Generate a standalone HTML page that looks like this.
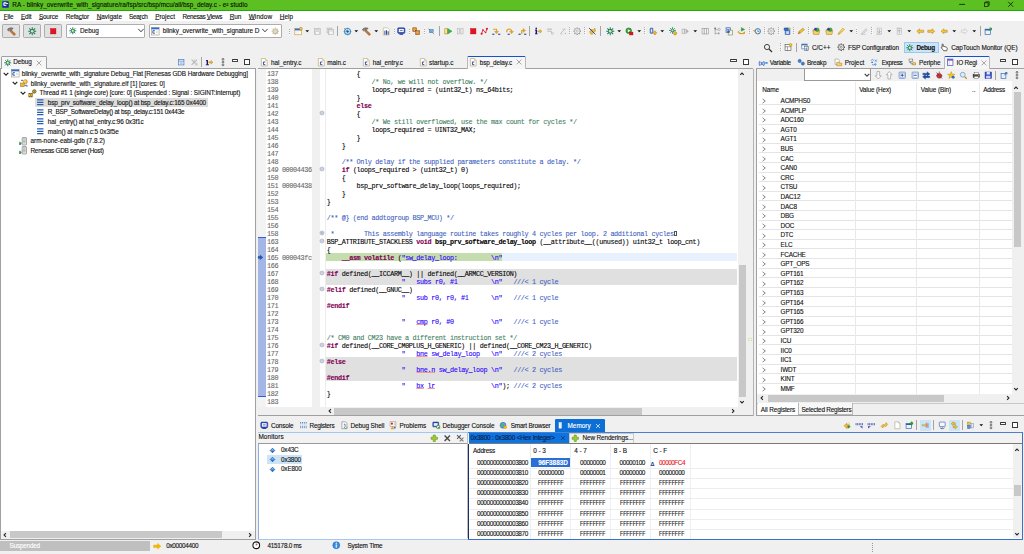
<!DOCTYPE html><html><head><meta charset="utf-8"><title>e2 studio</title><style>
html,body{margin:0;padding:0;}
body{width:1024px;height:554px;overflow:hidden;background:#f0f0f0;position:relative;font-family:"Liberation Sans",sans-serif;}
div{position:absolute;box-sizing:border-box;}
.t{white-space:pre;font-family:"Liberation Sans",sans-serif;-webkit-text-stroke:0.12px currentColor;}
.m{white-space:pre;font-family:"Liberation Mono",monospace;-webkit-text-stroke:0.1px currentColor;}
svg{position:absolute;overflow:visible;}
.q{text-decoration:underline solid #f09a9a;text-decoration-thickness:0.45px;text-underline-offset:0.4px;text-decoration-skip-ink:none;}
u{text-decoration:underline;text-decoration-thickness:0.4px;text-underline-offset:0.1px;text-decoration-color:#555;}
</style></head><body>
<div style="left:0.00px;top:0.00px;width:1024.00px;height:11.00px;background:#5cbf22;"></div>
<div style="left:0.00px;top:10.10px;width:1024.00px;height:0.90px;background:#22a80e;"></div>
<div style="left:1.90px;top:1.20px;width:7.00px;height:7.10px;background:#1b2a8a;border-radius:1px;border:0.5px solid #2f44b0;"></div>
<div class="t" style="left:3.00px;top:-0.70px;font-size:6.6px;line-height:10px;color:#fff;font-weight:bold;">e</div>
<div style="left:6.00px;top:2.60px;width:1.60px;height:1.20px;background:#e8ecff;"></div>
<div class="t" style="left:12.30px;top:0.20px;font-size:6.4px;line-height:10px;color:#081008;letter-spacing:0.032px;-webkit-text-stroke:0.12px #081008;">RA - blinky_overwrite_with_signature/ra/fsp/src/bsp/mcu/all/bsp_delay.c - e² studio</div>
<svg style="left:960.00px;top:0.00px" width="64" height="11" viewBox="0 0 64 11"><path d="M-0.8,4.4h5.9" stroke="#0a1a05" stroke-width="0.8" fill="none"/><rect x="24.5" y="2.8" width="3.6" height="3.6" fill="none" stroke="#0a1a05" stroke-width="0.7"/><path d="M25.6,2.8v-1h3.6v3.6h-1" fill="none" stroke="#0a1a05" stroke-width="0.7"/><path d="M48.2,1.8l5,5M53.2,1.8l-5,5" stroke="#0a1a05" stroke-width="0.8" fill="none"/></svg>
<div style="left:0.00px;top:11.00px;width:1024.00px;height:9.80px;background:#ffffff;"></div>
<div class="t" style="left:3.80px;top:12.00px;font-size:6.4px;line-height:10px;color:#111;letter-spacing:-0.203px;"><u>F</u>ile</div>
<div class="t" style="left:20.90px;top:12.00px;font-size:6.4px;line-height:10px;color:#111;letter-spacing:-0.157px;"><u>E</u>dit</div>
<div class="t" style="left:38.90px;top:12.00px;font-size:6.4px;line-height:10px;color:#111;letter-spacing:-0.180px;"><u>S</u>ource</div>
<div class="t" style="left:65.70px;top:12.00px;font-size:6.4px;line-height:10px;color:#111;letter-spacing:-0.098px;">Refa<u>c</u>tor</div>
<div class="t" style="left:96.70px;top:12.00px;font-size:6.4px;line-height:10px;color:#111;letter-spacing:0.005px;"><u>N</u>avigate</div>
<div class="t" style="left:129.00px;top:12.00px;font-size:6.4px;line-height:10px;color:#111;letter-spacing:-0.280px;">Sea<u>r</u>ch</div>
<div class="t" style="left:155.20px;top:12.00px;font-size:6.4px;line-height:10px;color:#111;letter-spacing:-0.017px;"><u>P</u>roject</div>
<div class="t" style="left:182.60px;top:12.00px;font-size:6.4px;line-height:10px;color:#111;letter-spacing:-0.346px;">Renesas <u>V</u>iews</div>
<div class="t" style="left:229.70px;top:12.00px;font-size:6.4px;line-height:10px;color:#111;letter-spacing:-0.114px;"><u>R</u>un</div>
<div class="t" style="left:248.70px;top:12.00px;font-size:6.4px;line-height:10px;color:#111;letter-spacing:0.140px;"><u>W</u>indow</div>
<div class="t" style="left:279.80px;top:12.00px;font-size:6.4px;line-height:10px;color:#111;letter-spacing:0.009px;"><u>H</u>elp</div>
<div style="left:2.30px;top:24.30px;width:17.70px;height:13.30px;background:#e1e1e1;border:0.6px solid #adadad;border-radius:1.2px;"></div>
<svg style="left:6.88px;top:26.63px" width="8.533" height="8.533" viewBox="0 0 16 16"><path d="M7.2,5L16,13.2L13.4,16L5,7.6Z" fill="#d0762a" stroke="#7a3a0a" stroke-width="0.9" /><path d="M0.8,5.5C2,2 6,0.5 11.5,2.5L8,6L5.8,4.8L3.2,7.6Z" fill="#8a8a8a" stroke="#3a3a3a" stroke-width="0.9" /></svg>
<div style="left:23.10px;top:24.30px;width:17.60px;height:13.30px;background:#e1e1e1;border:0.6px solid #adadad;border-radius:1.2px;"></div>
<svg style="left:27.63px;top:26.63px" width="8.533" height="8.533" viewBox="0 0 16 16"><path d="M8,0.5v15M0.5,8h15M2.5,2.5l11,11M13.5,2.5l-11,11" fill="none" stroke="#1b7a72" stroke-width="1.9" /><circle cx="8" cy="8" r="4.4" fill="#1b7a72"/><circle cx="8" cy="8" r="2.6" fill="#c8ec70"/><circle cx="7.3" cy="7.3" r="1" fill="#f4ffd8"/></svg>
<div style="left:44.00px;top:24.30px;width:17.70px;height:13.30px;background:#e1e1e1;border:0.6px solid #adadad;border-radius:1.2px;"></div>
<svg style="left:48.58px;top:26.63px" width="8.533" height="8.533" viewBox="0 0 16 16"><rect x="3" y="3" width="10" height="10" fill="#e81123" stroke="#b00010" stroke-width="0.8"/></svg>
<div style="left:66.00px;top:24.20px;width:79.40px;height:13.40px;background:#ffffff;border:0.6px solid #adadad;border-radius:1px;"></div>
<svg style="left:68.75px;top:27.15px" width="7.500" height="7.500" viewBox="0 0 16 16"><path d="M8,0.5v15M0.5,8h15M2.5,2.5l11,11M13.5,2.5l-11,11" fill="none" stroke="#1b7a72" stroke-width="1.9" /><circle cx="8" cy="8" r="4.4" fill="#1b7a72"/><circle cx="8" cy="8" r="2.6" fill="#c8ec70"/><circle cx="7.3" cy="7.3" r="1" fill="#f4ffd8"/></svg>
<div class="t" style="left:80.00px;top:25.90px;font-size:6.4px;line-height:10px;color:#111;letter-spacing:-0.022px;">Debug</div>
<svg style="left:136.60px;top:28.30px" width="8" height="6" viewBox="0 0 8 6"><path d="M1.3,0.9l2.65,2.9l2.65,-2.9" fill="none" stroke="#333" stroke-width="0.95" /></svg>
<div style="left:148.90px;top:24.20px;width:133.10px;height:13.40px;background:#ffffff;border:0.6px solid #adadad;border-radius:1px;"></div>
<svg style="left:151.43px;top:26.63px" width="8.533" height="8.533" viewBox="0 0 16 16"><rect x="0.8" y="1" width="14.4" height="14" fill="#fff" stroke="#a89a6a" stroke-width="1.2"/><rect x="0.8" y="1" width="14.4" height="3.4" fill="#2a6fd0"/><path d="M7.5,7h-4v4.6h4" fill="none" stroke="#1a3fa8" stroke-width="1.6" /><path d="M9.5,8h3M9.5,10.5h3" fill="none" stroke="#9ab8e8" stroke-width="1" /></svg>
<div class="t" style="left:162.70px;top:25.90px;font-size:6.4px;line-height:10px;color:#111;letter-spacing:-0.006px;">blinky_overwrite_with_signature D</div>
<svg style="left:261.20px;top:28.30px" width="8" height="6" viewBox="0 0 8 6"><path d="M1.3,0.9l2.65,2.9l2.65,-2.9" fill="none" stroke="#333" stroke-width="0.95" /></svg>
<svg style="left:270.73px;top:26.63px" width="8.533" height="8.533" viewBox="0 0 16 16"><circle cx="8" cy="8" r="4.2" fill="#efe9d6" stroke="#c9c0a0" stroke-width="2.4"/><circle cx="8" cy="8" r="1.6" fill="#f8f6ee" stroke="#c9c0a0" stroke-width="1"/><path d="M8,1v2M8,13v2M1,8h2M13,8h2M3,3l1.4,1.4M13,3l-1.4,1.4M3,13l1.4,-1.4M13,13l-1.4,-1.4" fill="none" stroke="#c9c0a0" stroke-width="2" /></svg>
<div style="left:288.70px;top:26.90px;width:0.65px;height:1.00px;background:#b4aca0;"></div>
<div style="left:289.35px;top:27.45px;width:0.60px;height:1.00px;background:#ffffff;"></div>
<div style="left:288.70px;top:29.03px;width:0.65px;height:1.00px;background:#b4aca0;"></div>
<div style="left:289.35px;top:29.58px;width:0.60px;height:1.00px;background:#ffffff;"></div>
<div style="left:288.70px;top:31.17px;width:0.65px;height:1.00px;background:#b4aca0;"></div>
<div style="left:289.35px;top:31.72px;width:0.60px;height:1.00px;background:#ffffff;"></div>
<div style="left:288.70px;top:33.30px;width:0.65px;height:1.00px;background:#b4aca0;"></div>
<div style="left:289.35px;top:33.85px;width:0.60px;height:1.00px;background:#ffffff;"></div>
<svg style="left:293.63px;top:26.63px" width="8.533" height="8.533" viewBox="0 0 16 16"><rect x="1.5" y="3" width="12.5" height="11.5" fill="#fff" stroke="#d0a848" stroke-width="1.4"/><rect x="1.5" y="3" width="12.5" height="3.4" fill="#2f6fd0"/><path d="M3.5,9h8M3.5,11.5h6" fill="none" stroke="#e8e0c0" stroke-width="1" /><circle cx="13" cy="3.2" r="2.7" fill="#f5c85a" stroke="#b8760b" stroke-width="0.9"/></svg>
<svg style="left:303.23px;top:26.63px" width="8.533" height="8.533" viewBox="0 0 16 16"><path d="M4.4,6h7.2l-3.6,4z" fill="#111" /></svg>
<svg style="left:313.23px;top:26.63px" width="8.533" height="8.533" viewBox="0 0 16 16"><rect x="2.5" y="2.5" width="11" height="11" fill="#e4e4e4" stroke="#b4b4b4" stroke-width="1.2"/><rect x="5" y="2.5" width="6" height="4" fill="#cfcfcf"/><rect x="4.5" y="9" width="7" height="4.5" fill="#f8f8f8" stroke="#bdbdbd" stroke-width="0.8"/></svg>
<svg style="left:325.73px;top:26.63px" width="8.533" height="8.533" viewBox="0 0 16 16"><rect x="2" y="2" width="9" height="9" fill="#e4e4e4" stroke="#b4b4b4" stroke-width="1.2"/><rect x="5" y="5" width="9" height="9" fill="#e4e4e4" stroke="#b4b4b4" stroke-width="1.2"/><rect x="7" y="9.5" width="5" height="4" fill="#f8f8f8"/></svg>
<div style="left:337.15px;top:26.00px;width:0.70px;height:9.80px;background:#a4a4a4;"></div>
<svg style="left:342.63px;top:26.63px" width="8.533" height="8.533" viewBox="0 0 16 16"><circle cx="8.5" cy="8.5" r="5.6" fill="#f4f9ff" stroke="#3a8fc8" stroke-width="2"/><circle cx="8.5" cy="8.5" r="2.3" fill="#1a4f8a"/><path d="M8.5,1v4M8.5,12v4M1,8.5h4M12,8.5h4" fill="none" stroke="#3a8fc8" stroke-width="1.2" /><path d="M2,2l5,5" fill="none" stroke="#8a7a5a" stroke-width="1.3" /></svg>
<svg style="left:352.33px;top:26.63px" width="8.533" height="8.533" viewBox="0 0 16 16"><path d="M4.4,6h7.2l-3.6,4z" fill="#111" /></svg>
<svg style="left:362.33px;top:26.63px" width="8.533" height="8.533" viewBox="0 0 16 16"><path d="M7.2,5L16,13.2L13.4,16L5,7.6Z" fill="#d0762a" stroke="#7a3a0a" stroke-width="0.9" /><path d="M0.8,5.5C2,2 6,0.5 11.5,2.5L8,6L5.8,4.8L3.2,7.6Z" fill="#8a8a8a" stroke="#3a3a3a" stroke-width="0.9" /></svg>
<svg style="left:372.33px;top:26.63px" width="8.533" height="8.533" viewBox="0 0 16 16"><path d="M4.4,6h7.2l-3.6,4z" fill="#111" /></svg>
<svg style="left:382.33px;top:26.63px" width="8.533" height="8.533" viewBox="0 0 16 16"><path d="M2.5,1.5h8l3,3v10.5h-11z" fill="#fff" stroke="#c8b070" stroke-width="1.2" /><path d="M5.5,7v7.5M8.5,6v8.5M11.5,8v6.5" fill="none" stroke="#1a3fa0" stroke-width="1.8" /></svg>
<div style="left:393.55px;top:26.90px;width:0.65px;height:1.00px;background:#b4aca0;"></div>
<div style="left:394.20px;top:27.45px;width:0.60px;height:1.00px;background:#ffffff;"></div>
<div style="left:393.55px;top:29.03px;width:0.65px;height:1.00px;background:#b4aca0;"></div>
<div style="left:394.20px;top:29.58px;width:0.60px;height:1.00px;background:#ffffff;"></div>
<div style="left:393.55px;top:31.17px;width:0.65px;height:1.00px;background:#b4aca0;"></div>
<div style="left:394.20px;top:31.72px;width:0.60px;height:1.00px;background:#ffffff;"></div>
<div style="left:393.55px;top:33.30px;width:0.65px;height:1.00px;background:#b4aca0;"></div>
<div style="left:394.20px;top:33.85px;width:0.60px;height:1.00px;background:#ffffff;"></div>
<svg style="left:397.33px;top:26.63px" width="8.533" height="8.533" viewBox="0 0 16 16"><rect x="1.2" y="1.5" width="13.6" height="10.5" fill="#2a4fc0" stroke="#1a2f90" stroke-width="1" rx="2"/><rect x="3.3" y="3.6" width="9.4" height="6" fill="#f4f8ff"/><path d="M5.5,6.6h5" fill="none" stroke="#223" stroke-width="1.1" /><rect x="4.5" y="12.5" width="7" height="2" fill="#1a2f80"/></svg>
<div style="left:408.55px;top:26.90px;width:0.65px;height:1.00px;background:#b4aca0;"></div>
<div style="left:409.20px;top:27.45px;width:0.60px;height:1.00px;background:#ffffff;"></div>
<div style="left:408.55px;top:29.03px;width:0.65px;height:1.00px;background:#b4aca0;"></div>
<div style="left:409.20px;top:29.58px;width:0.60px;height:1.00px;background:#ffffff;"></div>
<div style="left:408.55px;top:31.17px;width:0.65px;height:1.00px;background:#b4aca0;"></div>
<div style="left:409.20px;top:31.72px;width:0.60px;height:1.00px;background:#ffffff;"></div>
<div style="left:408.55px;top:33.30px;width:0.65px;height:1.00px;background:#b4aca0;"></div>
<div style="left:409.20px;top:33.85px;width:0.60px;height:1.00px;background:#ffffff;"></div>
<svg style="left:412.33px;top:26.63px" width="8.533" height="8.533" viewBox="0 0 16 16"><rect x="1.5" y="1.5" width="7" height="7" fill="#d08a30" stroke="#8a4a12" stroke-width="1"/><path d="M1.5,5h7M5,1.5v7" fill="none" stroke="#f0c070" stroke-width="0.9" /><rect x="7" y="7" width="7.5" height="7.5" fill="#d08a30" stroke="#8a4a12" stroke-width="1"/><path d="M7,10.7h7.5M10.7,7v7.5" fill="none" stroke="#f0c070" stroke-width="0.9" /></svg>
<div style="left:423.55px;top:26.90px;width:0.65px;height:1.00px;background:#b4aca0;"></div>
<div style="left:424.20px;top:27.45px;width:0.60px;height:1.00px;background:#ffffff;"></div>
<div style="left:423.55px;top:29.03px;width:0.65px;height:1.00px;background:#b4aca0;"></div>
<div style="left:424.20px;top:29.58px;width:0.60px;height:1.00px;background:#ffffff;"></div>
<div style="left:423.55px;top:31.17px;width:0.65px;height:1.00px;background:#b4aca0;"></div>
<div style="left:424.20px;top:31.72px;width:0.60px;height:1.00px;background:#ffffff;"></div>
<div style="left:423.55px;top:33.30px;width:0.65px;height:1.00px;background:#b4aca0;"></div>
<div style="left:424.20px;top:33.85px;width:0.60px;height:1.00px;background:#ffffff;"></div>
<svg style="left:427.33px;top:26.63px" width="8.533" height="8.533" viewBox="0 0 16 16"><rect x="5" y="5" width="6.5" height="5.5" fill="#7fb8e8" stroke="#2a6fa8" stroke-width="1"/><path d="M2.5,3l11,10.5" fill="none" stroke="#707a88" stroke-width="1.2" /></svg>
<div style="left:439.15px;top:26.00px;width:0.70px;height:9.80px;background:#a4a4a4;"></div>
<svg style="left:443.98px;top:26.63px" width="8.533" height="8.533" viewBox="0 0 16 16"><rect x="1.5" y="3.2" width="4.6" height="9.6" fill="#fdf4c0" stroke="#c8981a" stroke-width="1.5"/><path d="M7,3l8,5l-8,5z" fill="#3fb44f" stroke="#1f8a2f" stroke-width="0.8" /></svg>
<svg style="left:456.13px;top:26.63px" width="8.533" height="8.533" viewBox="0 0 16 16"><rect x="2.5" y="3" width="4.2" height="10" fill="#ececec" stroke="#b4b4b4" stroke-width="1.1"/><rect x="9" y="3" width="4.2" height="10" fill="#ececec" stroke="#b4b4b4" stroke-width="1.1"/></svg>
<svg style="left:468.63px;top:26.63px" width="8.533" height="8.533" viewBox="0 0 16 16"><rect x="3" y="3" width="10" height="10" fill="#e81123" stroke="#b00010" stroke-width="0.8"/></svg>
<svg style="left:480.23px;top:26.63px" width="8.533" height="8.533" viewBox="0 0 16 16"><path d="M3,13l2.5,-8l5,6l2.5,-8" fill="none" stroke="#d81123" stroke-width="1.5" /><circle cx="3" cy="12.5" r="1.9" fill="#e01020"/><circle cx="13" cy="3.5" r="1.9" fill="#e01020"/><circle cx="5.5" cy="5.5" r="1.3" fill="#e01020"/><circle cx="10.5" cy="10.5" r="1.3" fill="#e01020"/></svg>
<svg style="left:492.33px;top:26.63px" width="8.533" height="8.533" viewBox="0 0 16 16"><path d="M2,4.2h6.5v4" fill="none" stroke="#e0a020" stroke-width="2" /><path d="M4.6,8h7.8l-3.9,4.6z" fill="#e8a820" stroke="#a87412" stroke-width="0.5" /><rect x="0.5" y="12.6" width="4" height="2" fill="#1a3a9a"/><rect x="11.5" y="12.6" width="4" height="2" fill="#1a3a9a"/></svg>
<svg style="left:505.23px;top:26.63px" width="8.533" height="8.533" viewBox="0 0 16 16"><path d="M3,10c0,-8 9.5,-8 9.5,-1.5" fill="none" stroke="#e0a020" stroke-width="2.2" /><path d="M8.6,8h7.4l-3.7,4.6z" fill="#e8a820" stroke="#a87412" stroke-width="0.5" /><rect x="5" y="12.6" width="4" height="2" fill="#1a3a9a"/></svg>
<svg style="left:517.73px;top:26.63px" width="8.533" height="8.533" viewBox="0 0 16 16"><path d="M7,13v-6.5h3" fill="none" stroke="#e0a020" stroke-width="2.2" /><path d="M9.5,2.6l4.8,3.9l-4.8,3.9z" fill="#e8a820" stroke="#a87412" stroke-width="0.5" /><rect x="1" y="12.6" width="4" height="2" fill="#1a3a9a"/><rect x="11.5" y="12.6" width="4" height="2" fill="#1a3a9a"/></svg>
<div style="left:529.15px;top:26.00px;width:0.70px;height:9.80px;background:#a4a4a4;"></div>
<svg style="left:533.63px;top:26.63px" width="8.533" height="8.533" viewBox="0 0 16 16"><rect x="3" y="5" width="2.6" height="8" fill="#15157a"/><rect x="2" y="5" width="3" height="1.8" fill="#15157a"/><rect x="1.8" y="12" width="5" height="1.6" fill="#15157a"/><circle cx="4.2" cy="2.6" r="1.5" fill="#15157a"/><path d="M7,7h4v-2.5l4,3.5l-4,3.5v-2.5h-4z" fill="#f0b429" stroke="#a87412" stroke-width="0.6" /></svg>
<svg style="left:546.13px;top:26.63px" width="8.533" height="8.533" viewBox="0 0 16 16"><rect x="2" y="3" width="9" height="2" fill="#b8b8b8"/><rect x="2" y="7" width="9" height="2" fill="#c4c4c4"/><path d="M9,9l4,4" fill="none" stroke="#b0b0b0" stroke-width="1.5" /><circle cx="12" cy="12" r="2" fill="#e8e8e8" stroke="#b0b0b0" stroke-width="1"/></svg>
<svg style="left:558.63px;top:26.63px" width="8.533" height="8.533" viewBox="0 0 16 16"><path d="M3,12l8,-8" fill="none" stroke="#b8b8b8" stroke-width="1.6" /><path d="M6,4h7M2,13h5" fill="none" stroke="#c0c0c0" stroke-width="1.4" /><circle cx="12" cy="12" r="1.2" fill="#b0b0b0"/></svg>
<div style="left:569.45px;top:26.90px;width:0.65px;height:1.00px;background:#b4aca0;"></div>
<div style="left:570.10px;top:27.45px;width:0.60px;height:1.00px;background:#ffffff;"></div>
<div style="left:569.45px;top:29.03px;width:0.65px;height:1.00px;background:#b4aca0;"></div>
<div style="left:570.10px;top:29.58px;width:0.60px;height:1.00px;background:#ffffff;"></div>
<div style="left:569.45px;top:31.17px;width:0.65px;height:1.00px;background:#b4aca0;"></div>
<div style="left:570.10px;top:31.72px;width:0.60px;height:1.00px;background:#ffffff;"></div>
<div style="left:569.45px;top:33.30px;width:0.65px;height:1.00px;background:#b4aca0;"></div>
<div style="left:570.10px;top:33.85px;width:0.60px;height:1.00px;background:#ffffff;"></div>
<svg style="left:573.23px;top:26.63px" width="8.533" height="8.533" viewBox="0 0 16 16"><path d="M8,1v2.2M8,12.8v2.2M1,8h2.2M12.8,8h2.2M3,3l1.6,1.6M13,3l-1.6,1.6M3,13l1.6,-1.6M13,13l-1.6,-1.6" fill="none" stroke="#9a9a9a" stroke-width="2.6" /><circle cx="8" cy="8" r="5" fill="#f6f6f6" stroke="#9a9a9a" stroke-width="1.2"/><circle cx="8" cy="8" r="1.9" fill="#f0f0f0" stroke="#9a9a9a" stroke-width="1"/></svg>
<div style="left:584.45px;top:26.90px;width:0.65px;height:1.00px;background:#b4aca0;"></div>
<div style="left:585.10px;top:27.45px;width:0.60px;height:1.00px;background:#ffffff;"></div>
<div style="left:584.45px;top:29.03px;width:0.65px;height:1.00px;background:#b4aca0;"></div>
<div style="left:585.10px;top:29.58px;width:0.60px;height:1.00px;background:#ffffff;"></div>
<div style="left:584.45px;top:31.17px;width:0.65px;height:1.00px;background:#b4aca0;"></div>
<div style="left:585.10px;top:31.72px;width:0.60px;height:1.00px;background:#ffffff;"></div>
<div style="left:584.45px;top:33.30px;width:0.65px;height:1.00px;background:#b4aca0;"></div>
<div style="left:585.10px;top:33.85px;width:0.60px;height:1.00px;background:#ffffff;"></div>
<svg style="left:588.23px;top:26.63px" width="8.533" height="8.533" viewBox="0 0 16 16"><path d="M3,9l4,-5l3,2l3,-4l1,6l-4,2l-2,4l-3,-1z" fill="#f0c030" stroke="#a87412" stroke-width="0.8" /><path d="M2,2l12,12" fill="none" stroke="#1a3a9a" stroke-width="1.6" /></svg>
<div style="left:600.05px;top:26.00px;width:0.70px;height:9.80px;background:#a4a4a4;"></div>
<svg style="left:605.73px;top:26.63px" width="8.533" height="8.533" viewBox="0 0 16 16"><path d="M8,0.5v15M0.5,8h15M2.5,2.5l11,11M13.5,2.5l-11,11" fill="none" stroke="#1b7a72" stroke-width="1.9" /><circle cx="8" cy="8" r="4.4" fill="#1b7a72"/><circle cx="8" cy="8" r="2.6" fill="#c8ec70"/><circle cx="7.3" cy="7.3" r="1" fill="#f4ffd8"/></svg>
<svg style="left:615.23px;top:26.63px" width="8.533" height="8.533" viewBox="0 0 16 16"><path d="M4.4,6h7.2l-3.6,4z" fill="#111" /></svg>
<svg style="left:625.23px;top:26.63px" width="8.533" height="8.533" viewBox="0 0 16 16"><circle cx="7" cy="7" r="5.3" fill="#2ea32e" stroke="#176b17" stroke-width="1"/><path d="M5.3,4l5,3l-5,3z" fill="#fff" /><rect x="8.5" y="9.5" width="6.5" height="5.5" fill="#e81123" stroke="#900" stroke-width="0.6"/></svg>
<svg style="left:635.23px;top:26.63px" width="8.533" height="8.533" viewBox="0 0 16 16"><path d="M4.4,6h7.2l-3.6,4z" fill="#111" /></svg>
<div style="left:644.20px;top:26.90px;width:0.65px;height:1.00px;background:#b4aca0;"></div>
<div style="left:644.85px;top:27.45px;width:0.60px;height:1.00px;background:#ffffff;"></div>
<div style="left:644.20px;top:29.03px;width:0.65px;height:1.00px;background:#b4aca0;"></div>
<div style="left:644.85px;top:29.58px;width:0.60px;height:1.00px;background:#ffffff;"></div>
<div style="left:644.20px;top:31.17px;width:0.65px;height:1.00px;background:#b4aca0;"></div>
<div style="left:644.85px;top:31.72px;width:0.60px;height:1.00px;background:#ffffff;"></div>
<div style="left:644.20px;top:33.30px;width:0.65px;height:1.00px;background:#b4aca0;"></div>
<div style="left:644.85px;top:33.85px;width:0.60px;height:1.00px;background:#ffffff;"></div>
<svg style="left:648.63px;top:26.63px" width="8.533" height="8.533" viewBox="0 0 16 16"><rect x="2" y="2" width="5.5" height="10" fill="#5b8fd8" stroke="#2a4f98" stroke-width="1" rx="1.5"/><rect x="3.6" y="4" width="2.3" height="6" fill="#dfeaff"/><path d="M8,10l3,-3l3.5,3.5l-2,3.5h-3z" fill="#f0b429" stroke="#a87412" stroke-width="0.8" /></svg>
<svg style="left:658.23px;top:26.63px" width="8.533" height="8.533" viewBox="0 0 16 16"><path d="M4.4,6h7.2l-3.6,4z" fill="#111" /></svg>
<svg style="left:668.63px;top:26.63px" width="8.533" height="8.533" viewBox="0 0 16 16"><path d="M6.5,0v13M0,6.5h13M2,2l9,9M11,2l-9,9" fill="none" stroke="#1b7a72" stroke-width="1.4" /><circle cx="6.5" cy="6.5" r="3.3" fill="#1b7a72"/><circle cx="6.5" cy="6.5" r="2.1" fill="#c8ec70"/><path d="M8,11l3,-3l4,3l-2,4h-3z" fill="#f0b429" stroke="#a87412" stroke-width="0.8" /></svg>
<svg style="left:681.13px;top:26.63px" width="8.533" height="8.533" viewBox="0 0 16 16"><rect x="2" y="4" width="4" height="8" fill="#efefef" stroke="#a8a8a8" stroke-width="1.2"/><rect x="7" y="4" width="3" height="8" fill="#d8d8d8" stroke="#a8a8a8" stroke-width="1"/><path d="M10.5,4.5l4,3.5l-4,3.5z" fill="#a8a8a8" /></svg>
<svg style="left:690.73px;top:26.63px" width="8.533" height="8.533" viewBox="0 0 16 16"><path d="M4.4,6h7.2l-3.6,4z" fill="#111" /></svg>
<svg style="left:700.73px;top:26.63px" width="8.533" height="8.533" viewBox="0 0 16 16"><rect x="2" y="3" width="4" height="10" fill="#f4f4f4" stroke="#9a9a9a" stroke-width="1.2"/><rect x="6" y="3" width="4" height="10" fill="#f4f4f4" stroke="#9a9a9a" stroke-width="1.2"/><rect x="10" y="3" width="4" height="10" fill="#f4f4f4" stroke="#9a9a9a" stroke-width="1.2"/></svg>
<svg style="left:712.73px;top:26.63px" width="8.533" height="8.533" viewBox="0 0 16 16"><path d="M4,2v12M4,5h5M4,12h4" fill="none" stroke="#8a8a8a" stroke-width="1.2" /><rect x="2.5" y="1" width="3" height="3" fill="#777"/><rect x="9" y="10.5" width="3" height="3" fill="#888"/><circle cx="11.5" cy="4.5" r="2.2" fill="#f4f4f4" stroke="#8a8a8a" stroke-width="1"/></svg>
<svg style="left:725.48px;top:26.63px" width="8.533" height="8.533" viewBox="0 0 16 16"><rect x="2" y="1.5" width="8" height="9" fill="#dbe8fb" stroke="#2a5fb8" stroke-width="1.3"/><rect x="6" y="6" width="8" height="9" fill="#f6f3df" stroke="#8a8a5a" stroke-width="1.2"/><path d="M3.5,5h5M3.5,8h4" fill="none" stroke="#2a5fb8" stroke-width="1.4" /><circle cx="7" cy="9" r="2.2" fill="#2a5fb8"/></svg>
<svg style="left:737.23px;top:26.63px" width="8.533" height="8.533" viewBox="0 0 16 16"><path d="M4.5,6.5l-3,3l3,3v-2c3,3 8,2.5 9.5,-1.5v3.5h-9" fill="none" stroke="#d89a20" stroke-width="1.8" /><path d="M8,1l6.5,3.5l-6.5,3.5z" fill="#2ea34e" stroke="#177b37" stroke-width="0.6" /></svg>
<div style="left:748.95px;top:26.90px;width:0.65px;height:1.00px;background:#b4aca0;"></div>
<div style="left:749.60px;top:27.45px;width:0.60px;height:1.00px;background:#ffffff;"></div>
<div style="left:748.95px;top:29.03px;width:0.65px;height:1.00px;background:#b4aca0;"></div>
<div style="left:749.60px;top:29.58px;width:0.60px;height:1.00px;background:#ffffff;"></div>
<div style="left:748.95px;top:31.17px;width:0.65px;height:1.00px;background:#b4aca0;"></div>
<div style="left:749.60px;top:31.72px;width:0.60px;height:1.00px;background:#ffffff;"></div>
<div style="left:748.95px;top:33.30px;width:0.65px;height:1.00px;background:#b4aca0;"></div>
<div style="left:749.60px;top:33.85px;width:0.60px;height:1.00px;background:#ffffff;"></div>
<svg style="left:752.73px;top:26.63px" width="8.533" height="8.533" viewBox="0 0 16 16"><circle cx="9" cy="8" r="5" fill="#eef4ff" stroke="#2f6fb0" stroke-width="1.8"/><path d="M9,5v3.5h3" fill="none" stroke="#2f6fb0" stroke-width="1.3" /><path d="M1,6l6,6" fill="none" stroke="#c89a2a" stroke-width="2" /></svg>
<div style="left:763.95px;top:26.90px;width:0.65px;height:1.00px;background:#b4aca0;"></div>
<div style="left:764.60px;top:27.45px;width:0.60px;height:1.00px;background:#ffffff;"></div>
<div style="left:763.95px;top:29.03px;width:0.65px;height:1.00px;background:#b4aca0;"></div>
<div style="left:764.60px;top:29.58px;width:0.60px;height:1.00px;background:#ffffff;"></div>
<div style="left:763.95px;top:31.17px;width:0.65px;height:1.00px;background:#b4aca0;"></div>
<div style="left:764.60px;top:31.72px;width:0.60px;height:1.00px;background:#ffffff;"></div>
<div style="left:763.95px;top:33.30px;width:0.65px;height:1.00px;background:#b4aca0;"></div>
<div style="left:764.60px;top:33.85px;width:0.60px;height:1.00px;background:#ffffff;"></div>
<svg style="left:767.33px;top:26.63px" width="8.533" height="8.533" viewBox="0 0 16 16"><path d="M8,1v2.2M8,12.8v2.2M1,8h2.2M12.8,8h2.2M3,3l1.6,1.6M13,3l-1.6,1.6M3,13l1.6,-1.6M13,13l-1.6,-1.6" fill="none" stroke="#9a9a9a" stroke-width="2.6" /><circle cx="8" cy="8" r="5" fill="#f6f6f6" stroke="#9a9a9a" stroke-width="1.2"/><circle cx="8" cy="8" r="1.9" fill="#f0f0f0" stroke="#9a9a9a" stroke-width="1"/></svg>
<div style="left:778.45px;top:26.90px;width:0.65px;height:1.00px;background:#b4aca0;"></div>
<div style="left:779.10px;top:27.45px;width:0.60px;height:1.00px;background:#ffffff;"></div>
<div style="left:778.45px;top:29.03px;width:0.65px;height:1.00px;background:#b4aca0;"></div>
<div style="left:779.10px;top:29.58px;width:0.60px;height:1.00px;background:#ffffff;"></div>
<div style="left:778.45px;top:31.17px;width:0.65px;height:1.00px;background:#b4aca0;"></div>
<div style="left:779.10px;top:31.72px;width:0.60px;height:1.00px;background:#ffffff;"></div>
<div style="left:778.45px;top:33.30px;width:0.65px;height:1.00px;background:#b4aca0;"></div>
<div style="left:779.10px;top:33.85px;width:0.60px;height:1.00px;background:#ffffff;"></div>
<svg style="left:782.98px;top:26.63px" width="8.533" height="8.533" viewBox="0 0 16 16"><rect x="4" y="2" width="9" height="12" fill="#5b8fd8" stroke="#2a4f98" stroke-width="1"/><rect x="2" y="2" width="7" height="4" fill="#3a6fd0" stroke="#1a3a8a" stroke-width="0.8"/><rect x="6" y="8" width="5" height="5" fill="#cfe0ff"/><circle cx="12.5" cy="3" r="1.8" fill="#f5c518"/></svg>
<div style="left:793.45px;top:26.90px;width:0.65px;height:1.00px;background:#b4aca0;"></div>
<div style="left:794.10px;top:27.45px;width:0.60px;height:1.00px;background:#ffffff;"></div>
<div style="left:793.45px;top:29.03px;width:0.65px;height:1.00px;background:#b4aca0;"></div>
<div style="left:794.10px;top:29.58px;width:0.60px;height:1.00px;background:#ffffff;"></div>
<div style="left:793.45px;top:31.17px;width:0.65px;height:1.00px;background:#b4aca0;"></div>
<div style="left:794.10px;top:31.72px;width:0.60px;height:1.00px;background:#ffffff;"></div>
<div style="left:793.45px;top:33.30px;width:0.65px;height:1.00px;background:#b4aca0;"></div>
<div style="left:794.10px;top:33.85px;width:0.60px;height:1.00px;background:#ffffff;"></div>
<svg style="left:797.33px;top:26.63px" width="8.533" height="8.533" viewBox="0 0 16 16"><path d="M2,13l2,-5l7,-6l3,3l-7,6z" fill="#f0c030" stroke="#a87412" stroke-width="0.9" /><path d="M2,13l2,-5l3,3z" fill="#c8842a" /></svg>
<div style="left:808.45px;top:26.90px;width:0.65px;height:1.00px;background:#b4aca0;"></div>
<div style="left:809.10px;top:27.45px;width:0.60px;height:1.00px;background:#ffffff;"></div>
<div style="left:808.45px;top:29.03px;width:0.65px;height:1.00px;background:#b4aca0;"></div>
<div style="left:809.10px;top:29.58px;width:0.60px;height:1.00px;background:#ffffff;"></div>
<div style="left:808.45px;top:31.17px;width:0.65px;height:1.00px;background:#b4aca0;"></div>
<div style="left:809.10px;top:31.72px;width:0.60px;height:1.00px;background:#ffffff;"></div>
<div style="left:808.45px;top:33.30px;width:0.65px;height:1.00px;background:#b4aca0;"></div>
<div style="left:809.10px;top:33.85px;width:0.60px;height:1.00px;background:#ffffff;"></div>
<svg style="left:812.33px;top:26.63px" width="8.533" height="8.533" viewBox="0 0 16 16"><path d="M1.5,7h13l-1.5,7h-10z" fill="#f3d36b" stroke="#a87412" stroke-width="0.9" /><path d="M2,7v-2h4l1,2" fill="#e8b93a" stroke="#a87412" stroke-width="0.9" /><circle cx="10" cy="5" r="3.3" fill="#3fae3f" stroke="#176b17" stroke-width="0.8"/><circle cx="6.5" cy="4" r="2.4" fill="#2a3fa8"/></svg>
<svg style="left:824.73px;top:26.63px" width="8.533" height="8.533" viewBox="0 0 16 16"><path d="M1.5,7h13l-1.5,7h-10z" fill="#f3d36b" stroke="#a87412" stroke-width="0.9" /><path d="M2,7v-2h4l1,2" fill="#e8b93a" stroke="#a87412" stroke-width="0.9" /><circle cx="10" cy="5" r="3.3" fill="#3fae3f" stroke="#176b17" stroke-width="0.8"/><circle cx="6.5" cy="4" r="2.4" fill="#2a3fa8"/></svg>
<svg style="left:837.33px;top:26.63px" width="8.533" height="8.533" viewBox="0 0 16 16"><path d="M2,14l2,-4l7,-8l3,3l-8,7z" fill="#f5d04a" stroke="#b8841a" stroke-width="0.9" /><path d="M2,14l1.5,-3.5l2.5,2.5z" fill="#d89a3a" /><path d="M9,4l3,3" fill="none" stroke="#fff" stroke-width="0.8" /></svg>
<svg style="left:846.98px;top:26.63px" width="8.533" height="8.533" viewBox="0 0 16 16"><path d="M4.4,6h7.2l-3.6,4z" fill="#111" /></svg>
<div style="left:855.70px;top:26.90px;width:0.65px;height:1.00px;background:#b4aca0;"></div>
<div style="left:856.35px;top:27.45px;width:0.60px;height:1.00px;background:#ffffff;"></div>
<div style="left:855.70px;top:29.03px;width:0.65px;height:1.00px;background:#b4aca0;"></div>
<div style="left:856.35px;top:29.58px;width:0.60px;height:1.00px;background:#ffffff;"></div>
<div style="left:855.70px;top:31.17px;width:0.65px;height:1.00px;background:#b4aca0;"></div>
<div style="left:856.35px;top:31.72px;width:0.60px;height:1.00px;background:#ffffff;"></div>
<div style="left:855.70px;top:33.30px;width:0.65px;height:1.00px;background:#b4aca0;"></div>
<div style="left:856.35px;top:33.85px;width:0.60px;height:1.00px;background:#ffffff;"></div>
<svg style="left:859.93px;top:26.63px" width="8.533" height="8.533" viewBox="0 0 16 16"><path d="M2,13l9,-10l2.5,2.5l-8,8.5z" fill="#dcdcdc" stroke="#b8b8b8" stroke-width="0.9" /><path d="M1.5,14h10" fill="none" stroke="#c4c4c4" stroke-width="1" /></svg>
<div style="left:871.05px;top:26.90px;width:0.65px;height:1.00px;background:#b4aca0;"></div>
<div style="left:871.70px;top:27.45px;width:0.60px;height:1.00px;background:#ffffff;"></div>
<div style="left:871.05px;top:29.03px;width:0.65px;height:1.00px;background:#b4aca0;"></div>
<div style="left:871.70px;top:29.58px;width:0.60px;height:1.00px;background:#ffffff;"></div>
<div style="left:871.05px;top:31.17px;width:0.65px;height:1.00px;background:#b4aca0;"></div>
<div style="left:871.70px;top:31.72px;width:0.60px;height:1.00px;background:#ffffff;"></div>
<div style="left:871.05px;top:33.30px;width:0.65px;height:1.00px;background:#b4aca0;"></div>
<div style="left:871.70px;top:33.85px;width:0.60px;height:1.00px;background:#ffffff;"></div>
<svg style="left:874.73px;top:26.63px" width="8.533" height="8.533" viewBox="0 0 16 16"><rect x="4" y="2" width="8" height="11" fill="#f0f0f0" stroke="#b0b0b0" stroke-width="1"/><path d="M8,4v6M5.5,8l2.5,3l2.5,-3" fill="none" stroke="#a0a0a0" stroke-width="1.3" /><path d="M3,14h9" fill="none" stroke="#b8b8b8" stroke-width="1" /></svg>
<svg style="left:885.03px;top:26.63px" width="8.533" height="8.533" viewBox="0 0 16 16"><path d="M4.4,6h7.2l-3.6,4z" fill="#111" /></svg>
<svg style="left:895.23px;top:26.63px" width="8.533" height="8.533" viewBox="0 0 16 16"><rect x="4" y="3" width="8" height="11" fill="#f0f0f0" stroke="#b0b0b0" stroke-width="1"/><path d="M8,12v-6M5.5,8l2.5,-3l2.5,3" fill="none" stroke="#a0a0a0" stroke-width="1.3" /><path d="M3,2h9" fill="none" stroke="#b8b8b8" stroke-width="1" /></svg>
<svg style="left:905.03px;top:26.63px" width="8.533" height="8.533" viewBox="0 0 16 16"><path d="M4.4,6h7.2l-3.6,4z" fill="#111" /></svg>
<svg style="left:915.73px;top:26.63px" width="8.533" height="8.533" viewBox="0 0 16 16"><path d="M1.5,8l5,-4.5v2.5h8v4h-8v2.5z" fill="#f5c830" stroke="#a87412" stroke-width="0.9" /></svg>
<svg style="left:927.23px;top:26.63px" width="8.533" height="8.533" viewBox="0 0 16 16"><path d="M14.5,8l-5,-4.5v2.5h-8v4h8v2.5z" fill="#f5c830" stroke="#a87412" stroke-width="0.9" /></svg>
<svg style="left:940.33px;top:26.63px" width="8.533" height="8.533" viewBox="0 0 16 16"><path d="M2,8l5.5,-4.5v2.5h6v4h-6v2.5z" fill="#f5c830" stroke="#a87412" stroke-width="0.9" /></svg>
<svg style="left:950.13px;top:26.63px" width="8.533" height="8.533" viewBox="0 0 16 16"><path d="M4.4,6h7.2l-3.6,4z" fill="#111" /></svg>
<svg style="left:960.33px;top:26.63px" width="8.533" height="8.533" viewBox="0 0 16 16"><path d="M14,8l-5.5,-4.5v2.5h-6v4h6v2.5z" fill="#f4f4f4" stroke="#b4b4b4" stroke-width="0.9" /></svg>
<svg style="left:970.23px;top:26.63px" width="8.533" height="8.533" viewBox="0 0 16 16"><path d="M4.4,6h7.2l-3.6,4z" fill="#111" /></svg>
<div style="left:979.85px;top:26.00px;width:0.70px;height:9.80px;background:#a4a4a4;"></div>
<svg style="left:983.73px;top:26.63px" width="8.533" height="8.533" viewBox="0 0 16 16"><rect x="2" y="4" width="10" height="10" fill="#eaf2ff" stroke="#2a5fa8" stroke-width="1.2"/><rect x="2" y="4" width="10" height="2.5" fill="#2a5fa8"/><path d="M9,7l5,-5M14,2h-4M14,2v4" fill="none" stroke="#1f8a1f" stroke-width="1.6" /></svg>
<svg style="left:763.00px;top:43.00px" width="10" height="10" viewBox="0 0 10 10"><circle cx="4" cy="4" r="2.6" fill="none" stroke="#333" stroke-width="0.9"/><path d="M6,6l3,3" fill="none" stroke="#333" stroke-width="1.2" /></svg>
<div style="left:780.20px;top:43.30px;width:0.65px;height:1.00px;background:#b4aca0;"></div>
<div style="left:780.85px;top:43.85px;width:0.60px;height:1.00px;background:#ffffff;"></div>
<div style="left:780.20px;top:45.43px;width:0.65px;height:1.00px;background:#b4aca0;"></div>
<div style="left:780.85px;top:45.98px;width:0.60px;height:1.00px;background:#ffffff;"></div>
<div style="left:780.20px;top:47.57px;width:0.65px;height:1.00px;background:#b4aca0;"></div>
<div style="left:780.85px;top:48.12px;width:0.60px;height:1.00px;background:#ffffff;"></div>
<div style="left:780.20px;top:49.70px;width:0.65px;height:1.00px;background:#b4aca0;"></div>
<div style="left:780.85px;top:50.25px;width:0.60px;height:1.00px;background:#ffffff;"></div>
<svg style="left:784.23px;top:43.13px" width="8.533" height="8.533" viewBox="0 0 16 16"><rect x="2" y="3" width="11" height="11" fill="#fff" stroke="#555" stroke-width="1.2"/><path d="M2,7h11M6.5,7v7" fill="none" stroke="#555" stroke-width="1" /><circle cx="12.5" cy="3.5" r="2.6" fill="#f5c518" stroke="#b8860b" stroke-width="0.8"/></svg>
<div style="left:796.25px;top:42.60px;width:0.70px;height:9.80px;background:#a4a4a4;"></div>
<svg style="left:801.13px;top:43.13px" width="8.533" height="8.533" viewBox="0 0 16 16"><rect x="1.5" y="2" width="10" height="9" fill="#fff" stroke="#3a6fb5" stroke-width="1.2"/><rect x="1.5" y="2" width="10" height="2.5" fill="#3a6fb5"/><rect x="6.5" y="6.5" width="8" height="8" fill="#fff" stroke="#555" stroke-width="1"/><path d="M12.5,9.5h-3v3.5h3" fill="none" stroke="#2a3f9a" stroke-width="1.3" /></svg>
<div class="t" style="left:812.00px;top:43.00px;font-size:6.4px;line-height:10px;color:#111;letter-spacing:-0.019px;">C/C++</div>
<svg style="left:836.98px;top:43.13px" width="8.533" height="8.533" viewBox="0 0 16 16"><path d="M8,1v2.2M8,12.8v2.2M1,8h2.2M12.8,8h2.2M3,3l1.6,1.6M13,3l-1.6,1.6M3,13l1.6,-1.6M13,13l-1.6,-1.6" fill="none" stroke="#5a5a5a" stroke-width="2.6" /><circle cx="8" cy="8" r="5" fill="#f6f6f6" stroke="#5a5a5a" stroke-width="1.3"/><circle cx="8" cy="8" r="1.9" fill="#f0f0f0" stroke="#5a5a5a" stroke-width="1.1"/></svg>
<div class="t" style="left:847.90px;top:43.00px;font-size:6.4px;line-height:10px;color:#111;letter-spacing:-0.063px;">FSP Configuration</div>
<div style="left:903.60px;top:41.80px;width:35.30px;height:11.00px;background:#cce4f7;border:0.55px solid #99c9ef;"></div>
<svg style="left:906.25px;top:43.65px" width="7.500" height="7.500" viewBox="0 0 16 16"><path d="M8,0.5v15M0.5,8h15M2.5,2.5l11,11M13.5,2.5l-11,11" fill="none" stroke="#1b7a72" stroke-width="1.9" /><circle cx="8" cy="8" r="4.4" fill="#1b7a72"/><circle cx="8" cy="8" r="2.6" fill="#c8ec70"/><circle cx="7.3" cy="7.3" r="1" fill="#f4ffd8"/></svg>
<div class="t" style="left:916.40px;top:43.00px;font-size:6.4px;line-height:10px;color:#111;letter-spacing:-0.302px;font-weight:bold;">Debug</div>
<svg style="left:940.33px;top:43.13px" width="8.533" height="8.533" viewBox="0 0 16 16"><path d="M4,8v-5c0,-1.5 2,-1.5 2,0v3l5,1.5c2,0.5 3,2 2.5,4l-1,3h-5.5l-4.5,-5.5c-0.5,-1 1,-2 1.5,-1z" fill="#fff" stroke="#111" stroke-width="1.2" /></svg>
<div class="t" style="left:951.20px;top:43.00px;font-size:6.4px;line-height:10px;color:#111;letter-spacing:-0.039px;">CapTouch Monitor (QE)</div>
<div style="left:0.20px;top:68.30px;width:255.80px;height:471.50px;background:#ffffff;border:0.6px solid #a0a0a0;"></div>
<div style="left:0.50px;top:55.50px;width:46.40px;height:13.40px;background:#f6f6f6;border:0.6px solid #a0a0a0;border-bottom:none;border-radius:1.5px 1.5px 0 0;"></div>
<svg style="left:3.85px;top:58.75px" width="7.500" height="7.500" viewBox="0 0 16 16"><path d="M8,0.5v15M0.5,8h15M2.5,2.5l11,11M13.5,2.5l-11,11" fill="none" stroke="#1b7a72" stroke-width="1.9" /><circle cx="8" cy="8" r="4.4" fill="#1b7a72"/><circle cx="8" cy="8" r="2.6" fill="#c8ec70"/><circle cx="7.3" cy="7.3" r="1" fill="#f4ffd8"/></svg>
<div class="t" style="left:13.30px;top:57.40px;font-size:6.4px;line-height:10px;color:#111;letter-spacing:-0.112px;">Debug</div>
<svg style="left:36.20px;top:59.60px" width="6" height="6" viewBox="0 0 6 6"><path d="M0.6000000000000001,0.6000000000000001L5.4,5.4M5.4,0.6000000000000001L0.6000000000000001,5.4" fill="none" stroke="#6a6a6a" stroke-width="0.55" /></svg>
<svg style="left:177.43px;top:57.73px" width="8.533" height="8.533" viewBox="0 0 16 16"><rect x="3" y="3" width="10" height="10" fill="#eaf2ff" stroke="#4a7fc0" stroke-width="1.3"/><path d="M3,6h10M5.5,9.5h5" fill="none" stroke="#4a7fc0" stroke-width="1.2" /></svg>
<svg style="left:189.73px;top:57.73px" width="8.533" height="8.533" viewBox="0 0 16 16"><path d="M3,3l10,10M13,3l-10,10" fill="none" stroke="#b4b4b4" stroke-width="2" /><path d="M8,2l6,12" fill="none" stroke="#c8c8c8" stroke-width="1.4" /><rect x="9" y="9" width="5" height="5" fill="#d0d0d0"/></svg>
<div style="left:201.05px;top:56.90px;width:0.70px;height:9.80px;background:#a4a4a4;"></div>
<svg style="left:205.23px;top:57.73px" width="8.533" height="8.533" viewBox="0 0 16 16"><rect x="3" y="4" width="2.6" height="9" fill="#15157a"/><rect x="1.8" y="4" width="3.5" height="1.8" fill="#15157a"/><rect x="1.5" y="12" width="6" height="1.6" fill="#15157a"/><path d="M7,7h4v-2.5l4,3.5l-4,3.5v-2.5h-4z" fill="#f0b429" stroke="#a87412" stroke-width="0.6" /></svg>
<svg style="left:221.00px;top:58.00px" width="4" height="9" viewBox="0 0 4 9"><circle cx="2" cy="1.3" r="0.9" fill="#fff" stroke="#222" stroke-width="0.6"/><circle cx="2" cy="4.1" r="0.9" fill="#fff" stroke="#222" stroke-width="0.6"/><circle cx="2" cy="6.9" r="0.9" fill="#fff" stroke="#222" stroke-width="0.6"/></svg>
<div style="left:231.70px;top:59.10px;width:6.20px;height:3.00px;background:#fff;border:0.55px solid #444;border-top:0.9px solid #333;border-radius:0.8px;"></div>
<div style="left:244.00px;top:59.20px;width:6.00px;height:6.00px;background:#fff;border:0.55px solid #3a3a3a;border-top:1.1px solid #2a2a2a;border-radius:0.6px;"></div>
<div style="left:35.40px;top:98.10px;width:172.20px;height:8.60px;background:#dcdcdc;"></div>
<svg style="left:3.00px;top:70.70px" width="6" height="6" viewBox="0 0 6 6"><path d="M0.7,1.8l2.3,2.4l2.3,-2.4" fill="none" stroke="#222" stroke-width="1.15" /></svg>
<svg style="left:10.73px;top:69.43px" width="8.533" height="8.533" viewBox="0 0 16 16"><rect x="0.8" y="1" width="14.4" height="14" fill="#fff" stroke="#a89a6a" stroke-width="1.2"/><rect x="0.8" y="1" width="14.4" height="3.4" fill="#2a6fd0"/><path d="M7.5,7h-4v4.6h4" fill="none" stroke="#1a3fa8" stroke-width="1.6" /><path d="M9.5,8h3M9.5,10.5h3" fill="none" stroke="#9ab8e8" stroke-width="1" /></svg>
<div class="t" style="left:21.70px;top:69.05px;font-size:6.4px;line-height:10px;color:#111;letter-spacing:-0.100px;">blinky_overwrite_with_signature Debug_Flat [Renesas GDB Hardware Debugging]</div>
<svg style="left:11.50px;top:80.30px" width="6" height="6" viewBox="0 0 6 6"><path d="M0.7,1.8l2.3,2.4l2.3,-2.4" fill="none" stroke="#222" stroke-width="1.15" /></svg>
<svg style="left:19.53px;top:79.03px" width="8.533" height="8.533" viewBox="0 0 16 16"><rect x="1" y="7.5" width="7" height="7" fill="#e8b830" stroke="#a87412" stroke-width="1"/><circle cx="10" cy="5" r="3.8" fill="#f5c030" stroke="#a8700b" stroke-width="1"/><circle cx="9.2" cy="4.2" r="1.3" fill="#fff0a0"/><path d="M2,2.5h3.5M11,13h3.5" fill="none" stroke="#2a4fc0" stroke-width="1.8" /><path d="M8.5,12.5l4,-1" fill="none" stroke="#2a4fc0" stroke-width="1.4" /></svg>
<div class="t" style="left:30.70px;top:78.65px;font-size:6.4px;line-height:10px;color:#111;letter-spacing:-0.039px;">blinky_overwrite_with_signature.elf [1] [cores: 0]</div>
<svg style="left:20.40px;top:89.90px" width="6" height="6" viewBox="0 0 6 6"><path d="M0.7,1.8l2.3,2.4l2.3,-2.4" fill="none" stroke="#222" stroke-width="1.15" /></svg>
<svg style="left:27.93px;top:88.63px" width="8.533" height="8.533" viewBox="0 0 16 16"><rect x="1.5" y="8" width="3" height="7" fill="#f0c840" stroke="#7a5a12" stroke-width="1"/><rect x="5.5" y="8" width="3" height="7" fill="#f0c840" stroke="#7a5a12" stroke-width="1"/><path d="M8,8l2.5,-2" fill="none" stroke="#7a5a12" stroke-width="1.2" /><circle cx="11.8" cy="4.6" r="3.2" fill="#f5c840" stroke="#3a2a0a" stroke-width="1.3"/><path d="M11.8,2.8v3.4" fill="none" stroke="#3a2a0a" stroke-width="1.1" /></svg>
<div class="t" style="left:39.40px;top:88.25px;font-size:6.4px;line-height:10px;color:#111;letter-spacing:-0.112px;">Thread #1 1 (single core) [core: 0] (Suspended : Signal : SIGINT:Interrupt)</div>
<svg style="left:36.23px;top:98.23px" width="8.533" height="8.533" viewBox="0 0 16 16"><path d="M2,3.5h12M2,8h12M2,12.5h12" fill="none" stroke="#2a5fb0" stroke-width="2.3" /></svg>
<div class="t" style="left:47.80px;top:97.85px;font-size:6.4px;line-height:10px;color:#111;letter-spacing:-0.157px;">bsp_prv_software_delay_loop() at bsp_delay.c:165 0x4400</div>
<svg style="left:36.23px;top:107.83px" width="8.533" height="8.533" viewBox="0 0 16 16"><path d="M2,3.5h12M2,8h12M2,12.5h12" fill="none" stroke="#2a5fb0" stroke-width="2.3" /></svg>
<div class="t" style="left:47.80px;top:107.45px;font-size:6.4px;line-height:10px;color:#111;letter-spacing:-0.245px;">R_BSP_SoftwareDelay() at bsp_delay.c:151 0x443e</div>
<svg style="left:36.23px;top:117.43px" width="8.533" height="8.533" viewBox="0 0 16 16"><path d="M2,3.5h12M2,8h12M2,12.5h12" fill="none" stroke="#2a5fb0" stroke-width="2.3" /></svg>
<div class="t" style="left:47.80px;top:117.05px;font-size:6.4px;line-height:10px;color:#111;letter-spacing:-0.108px;">hal_entry() at hal_entry.c:96 0x3f1c</div>
<svg style="left:36.23px;top:127.03px" width="8.533" height="8.533" viewBox="0 0 16 16"><path d="M2,3.5h12M2,8h12M2,12.5h12" fill="none" stroke="#2a5fb0" stroke-width="2.3" /></svg>
<div class="t" style="left:47.80px;top:126.65px;font-size:6.4px;line-height:10px;color:#111;letter-spacing:-0.050px;">main() at main.c:5 0x3f5e</div>
<svg style="left:19.48px;top:136.63px" width="8.533" height="8.533" viewBox="0 0 16 16"><rect x="6" y="1" width="8" height="14" fill="#f0f0f0" stroke="#6a6a6a" stroke-width="1.1" rx="1"/><path d="M7.5,3.5h5M7.5,6h5M7.5,8.5h5M7.5,11h5" fill="none" stroke="#8a8a8a" stroke-width="1.1" /><path d="M1,9l4,2.5l-4,2.5z" fill="#2ea32e" stroke="#176b17" stroke-width="0.6" /><rect x="0.8" y="12.5" width="2.4" height="2.4" fill="#2a5fb0"/></svg>
<div class="t" style="left:30.50px;top:136.25px;font-size:6.4px;line-height:10px;color:#111;letter-spacing:-0.008px;">arm-none-eabi-gdb (7.8.2)</div>
<svg style="left:19.48px;top:146.23px" width="8.533" height="8.533" viewBox="0 0 16 16"><rect x="6" y="1" width="8" height="14" fill="#f0f0f0" stroke="#6a6a6a" stroke-width="1.1" rx="1"/><path d="M7.5,3.5h5M7.5,6h5M7.5,8.5h5M7.5,11h5" fill="none" stroke="#8a8a8a" stroke-width="1.1" /><path d="M1,9l4,2.5l-4,2.5z" fill="#2ea32e" stroke="#176b17" stroke-width="0.6" /><rect x="0.8" y="12.5" width="2.4" height="2.4" fill="#2a5fb0"/></svg>
<div class="t" style="left:30.50px;top:145.85px;font-size:6.4px;line-height:10px;color:#111;letter-spacing:-0.257px;">Renesas GDB server (Host)</div>
<div style="left:1.10px;top:531.00px;width:254.30px;height:7.80px;background:#f0f0f0;"></div>
<div style="left:10.00px;top:531.30px;width:212.00px;height:7.20px;background:#c8c8c8;"></div>
<svg style="left:2.00px;top:532.00px" width="6" height="6" viewBox="0 0 6 6"><path d="M3.9,1.2l-1.8,1.8l1.8,1.8" fill="none" stroke="#262626" stroke-width="1.1" /></svg>
<svg style="left:247.00px;top:532.00px" width="6" height="6" viewBox="0 0 6 6"><path d="M2.1,1.2l1.8,1.8l-1.8,1.8" fill="none" stroke="#262626" stroke-width="1.1" /></svg>
<div style="left:257.60px;top:68.30px;width:495.60px;height:347.60px;background:#ffffff;border:0.6px solid #a0a0a0;"></div>
<div style="left:466.70px;top:55.60px;width:59.70px;height:13.30px;background:#f6f6f6;border:0.6px solid #b8b8b8;border-bottom:none;border-top:1.2px solid #1a4fd0;border-radius:1.5px 1.5px 0 0;"></div>
<svg style="left:260.48px;top:58.03px" width="8.533" height="8.533" viewBox="0 0 16 16"><path d="M2.5,1h7.5l3.5,3.5v10.5h-11z" fill="#fff" stroke="#b89a58" stroke-width="1.1" /><path d="M10,1v3.5h3.5" fill="#f4ecd0" stroke="#b89a58" stroke-width="0.8" /><path d="M10,7.5h-3.6v5h3.6" fill="none" stroke="#1a3fa8" stroke-width="1.7" /></svg>
<div class="t" style="left:271.00px;top:57.90px;font-size:6.4px;line-height:10px;color:#111;letter-spacing:-0.030px;">hal_entry.c</div>
<svg style="left:317.23px;top:58.03px" width="8.533" height="8.533" viewBox="0 0 16 16"><path d="M2.5,1h7.5l3.5,3.5v10.5h-11z" fill="#fff" stroke="#b89a58" stroke-width="1.1" /><path d="M10,1v3.5h3.5" fill="#f4ecd0" stroke="#b89a58" stroke-width="0.8" /><path d="M10,7.5h-3.6v5h3.6" fill="none" stroke="#1a3fa8" stroke-width="1.7" /></svg>
<div class="t" style="left:327.25px;top:57.90px;font-size:6.4px;line-height:10px;color:#111;letter-spacing:-0.017px;">main.c</div>
<svg style="left:362.23px;top:58.03px" width="8.533" height="8.533" viewBox="0 0 16 16"><path d="M2.5,1h7.5l3.5,3.5v10.5h-11z" fill="#fff" stroke="#b89a58" stroke-width="1.1" /><path d="M10,1v3.5h3.5" fill="#f4ecd0" stroke="#b89a58" stroke-width="0.8" /><path d="M10,7.5h-3.6v5h3.6" fill="none" stroke="#1a3fa8" stroke-width="1.7" /></svg>
<div class="t" style="left:372.75px;top:57.90px;font-size:6.4px;line-height:10px;color:#111;letter-spacing:-0.053px;">hal_entry.c</div>
<svg style="left:418.73px;top:58.03px" width="8.533" height="8.533" viewBox="0 0 16 16"><path d="M2.5,1h7.5l3.5,3.5v10.5h-11z" fill="#fff" stroke="#b89a58" stroke-width="1.1" /><path d="M10,1v3.5h3.5" fill="#f4ecd0" stroke="#b89a58" stroke-width="0.8" /><path d="M10,7.5h-3.6v5h3.6" fill="none" stroke="#1a3fa8" stroke-width="1.7" /></svg>
<div class="t" style="left:429.00px;top:57.90px;font-size:6.4px;line-height:10px;color:#111;letter-spacing:-0.005px;">startup.c</div>
<svg style="left:469.23px;top:58.03px" width="8.533" height="8.533" viewBox="0 0 16 16"><path d="M2.5,1h7.5l3.5,3.5v10.5h-11z" fill="#fff" stroke="#b89a58" stroke-width="1.1" /><path d="M10,1v3.5h3.5" fill="#f4ecd0" stroke="#b89a58" stroke-width="0.8" /><path d="M10,7.5h-3.6v5h3.6" fill="none" stroke="#1a3fa8" stroke-width="1.7" /></svg>
<div class="t" style="left:479.75px;top:57.90px;font-size:6.4px;line-height:10px;color:#111;letter-spacing:-0.130px;">bsp_delay.c</div>
<svg style="left:516.25px;top:59.40px" width="6" height="6" viewBox="0 0 6 6"><path d="M0.6000000000000001,0.6000000000000001L5.4,5.4M5.4,0.6000000000000001L0.6000000000000001,5.4" fill="none" stroke="#6a6a6a" stroke-width="0.55" /></svg>
<div style="left:730.40px;top:58.70px;width:6.20px;height:3.00px;background:#fff;border:0.55px solid #444;border-top:0.9px solid #333;border-radius:0.8px;"></div>
<div style="left:742.80px;top:58.80px;width:6.00px;height:6.00px;background:#fff;border:0.55px solid #3a3a3a;border-top:1.1px solid #2a2a2a;border-radius:0.6px;"></div>
<div style="left:258.20px;top:68.90px;width:8.20px;height:337.80px;background:#f3f3f3;"></div>
<div style="left:312.00px;top:68.90px;width:7.70px;height:337.80px;background:#f0f0f0;"></div>
<div style="left:325.40px;top:68.90px;width:0.50px;height:337.80px;background:#ececec;"></div>
<div style="left:258.20px;top:406.70px;width:68.00px;height:8.60px;background:#f0f0f0;"></div>
<div style="left:738.40px;top:68.90px;width:7.90px;height:338.00px;background:#f0f0f0;"></div>
<div style="left:746.30px;top:68.90px;width:6.90px;height:346.40px;background:#f0f0f0;"></div>
<div style="left:753.20px;top:68.50px;width:0.70px;height:347.20px;background:#b4b4b4;"></div>
<div style="left:738.70px;top:264.50px;width:7.60px;height:132.50px;background:#c8c8c8;"></div>
<svg style="left:738.80px;top:70.60px" width="6" height="6" viewBox="0 0 6 6"><path d="M1.2,3.9l1.8,-1.8l1.8,1.8" fill="none" stroke="#262626" stroke-width="1.1" /></svg>
<svg style="left:738.80px;top:399.00px" width="6" height="6" viewBox="0 0 6 6"><path d="M1.2,2.1l1.8,1.8l1.8,-1.8" fill="none" stroke="#262626" stroke-width="1.1" /></svg>
<div style="left:748.40px;top:338.40px;width:3.40px;height:2.20px;background:#fbfff6;border:0.4px solid #d4e8b8;"></div>
<div style="left:326.00px;top:407.30px;width:420.30px;height:8.00px;background:#f0f0f0;"></div>
<div style="left:334.40px;top:407.60px;width:307.60px;height:7.40px;background:#c8c8c8;"></div>
<svg style="left:326.60px;top:408.30px" width="6" height="6" viewBox="0 0 6 6"><path d="M3.9,1.2l-1.8,1.8l1.8,1.8" fill="none" stroke="#262626" stroke-width="1.1" /></svg>
<svg style="left:730.00px;top:408.30px" width="6" height="6" viewBox="0 0 6 6"><path d="M2.1,1.2l1.8,1.8l-1.8,1.8" fill="none" stroke="#262626" stroke-width="1.1" /></svg>
<div style="left:326.00px;top:253.40px;width:411.40px;height:8.00px;background:#e8f2fe;"></div>
<div style="left:326.00px;top:253.40px;width:176.47px;height:8.00px;background:#c5dcae;"></div>
<div style="left:326.00px;top:269.40px;width:411.40px;height:16.00px;background:#e0e0e0;"></div>
<div style="left:326.00px;top:357.40px;width:411.40px;height:24.00px;background:#e0e0e0;"></div>
<div style="left:258.20px;top:237.00px;width:8.20px;height:160.20px;background:#a4b6e6;border-top:0.7px solid #3060d0;border-bottom:0.7px solid #3060d0;"></div>
<svg style="left:258.00px;top:255.00px" width="6" height="5" viewBox="0 0 6 5"><path d="M0.2,1.5h2v-1.3l2.6,2.2l-2.6,2.2v-1.3h-2z" fill="#1a5fc0" stroke="#0a2a7a" stroke-width="0.4" /></svg>
<svg style="left:319.20px;top:110.30px" width="6" height="6" viewBox="0 0 6 6"><circle cx="3" cy="3" r="1.95" fill="#fff" stroke="#7a8cac" stroke-width="0.6"/><path d="M1.8,3h2.4" fill="none" stroke="#4a5a7a" stroke-width="0.55" /></svg>
<svg style="left:319.20px;top:166.30px" width="6" height="6" viewBox="0 0 6 6"><circle cx="3" cy="3" r="1.95" fill="#fff" stroke="#7a8cac" stroke-width="0.6"/><path d="M1.8,3h2.4" fill="none" stroke="#4a5a7a" stroke-width="0.55" /></svg>
<svg style="left:319.20px;top:238.30px" width="6" height="6" viewBox="0 0 6 6"><circle cx="3" cy="3" r="1.95" fill="#fff" stroke="#7a8cac" stroke-width="0.6"/><path d="M1.8,3h2.4" fill="none" stroke="#4a5a7a" stroke-width="0.55" /></svg>
<svg style="left:319.20px;top:270.30px" width="6" height="6" viewBox="0 0 6 6"><circle cx="3" cy="3" r="1.95" fill="#fff" stroke="#7a8cac" stroke-width="0.6"/><path d="M1.8,3h2.4" fill="none" stroke="#4a5a7a" stroke-width="0.55" /></svg>
<svg style="left:319.20px;top:286.30px" width="6" height="6" viewBox="0 0 6 6"><circle cx="3" cy="3" r="1.95" fill="#fff" stroke="#7a8cac" stroke-width="0.6"/><path d="M1.8,3h2.4" fill="none" stroke="#4a5a7a" stroke-width="0.55" /></svg>
<svg style="left:319.20px;top:342.30px" width="6" height="6" viewBox="0 0 6 6"><circle cx="3" cy="3" r="1.95" fill="#fff" stroke="#7a8cac" stroke-width="0.6"/><path d="M1.8,3h2.4" fill="none" stroke="#4a5a7a" stroke-width="0.55" /></svg>
<svg style="left:319.20px;top:358.30px" width="6" height="6" viewBox="0 0 6 6"><circle cx="3" cy="3" r="1.95" fill="#fff" stroke="#7a8cac" stroke-width="0.6"/><path d="M1.8,3h2.4" fill="none" stroke="#4a5a7a" stroke-width="0.55" /></svg>
<svg style="left:319.20px;top:230.30px" width="6" height="6" viewBox="0 0 6 6"><circle cx="3" cy="3" r="1.95" fill="#fff" stroke="#7a8cac" stroke-width="0.6"/><path d="M1.8,3h2.4" fill="none" stroke="#4a5a7a" stroke-width="0.55" /><path d="M3,1.9v2.2" fill="none" stroke="#6a7a95" stroke-width="0.5" /></svg>
<div class="m" style="left:267.00px;top:68.50px;font-size:6.8px;line-height:10px;color:#686868;letter-spacing:-0.3467px;">137</div>
<div class="m" style="left:326.75px;top:68.50px;font-size:6.8px;line-height:10px;color:#000;letter-spacing:-0.3467px;">        {</div>
<div class="m" style="left:267.00px;top:76.50px;font-size:6.8px;line-height:10px;color:#686868;letter-spacing:-0.3467px;">138</div>
<div class="m" style="left:326.75px;top:76.50px;font-size:6.8px;line-height:10px;color:#000;letter-spacing:-0.3467px;">            <span style="color:#3f7f5f;">/* No, we will not overflow. */</span></div>
<div class="m" style="left:267.00px;top:84.50px;font-size:6.8px;line-height:10px;color:#686868;letter-spacing:-0.3467px;">139</div>
<div class="m" style="left:326.75px;top:84.50px;font-size:6.8px;line-height:10px;color:#000;letter-spacing:-0.3467px;">            loops_required = (uint32_t) ns_64bits;</div>
<div class="m" style="left:267.00px;top:92.50px;font-size:6.8px;line-height:10px;color:#686868;letter-spacing:-0.3467px;">140</div>
<div class="m" style="left:326.75px;top:92.50px;font-size:6.8px;line-height:10px;color:#000;letter-spacing:-0.3467px;">        }</div>
<div class="m" style="left:267.00px;top:100.50px;font-size:6.8px;line-height:10px;color:#686868;letter-spacing:-0.3467px;">141</div>
<div class="m" style="left:326.75px;top:100.50px;font-size:6.8px;line-height:10px;color:#000;letter-spacing:-0.3467px;">        <span style="color:#7f0055;font-weight:bold;">else</span></div>
<div class="m" style="left:267.00px;top:108.50px;font-size:6.8px;line-height:10px;color:#686868;letter-spacing:-0.3467px;">142</div>
<div class="m" style="left:326.75px;top:108.50px;font-size:6.8px;line-height:10px;color:#000;letter-spacing:-0.3467px;">        {</div>
<div class="m" style="left:267.00px;top:116.50px;font-size:6.8px;line-height:10px;color:#686868;letter-spacing:-0.3467px;">143</div>
<div class="m" style="left:326.75px;top:116.50px;font-size:6.8px;line-height:10px;color:#000;letter-spacing:-0.3467px;">            <span style="color:#3f7f5f;">/* We still overflowed, use the max count for cycles */</span></div>
<div class="m" style="left:267.00px;top:124.50px;font-size:6.8px;line-height:10px;color:#686868;letter-spacing:-0.3467px;">144</div>
<div class="m" style="left:326.75px;top:124.50px;font-size:6.8px;line-height:10px;color:#000;letter-spacing:-0.3467px;">            loops_required = UINT32_MAX;</div>
<div class="m" style="left:267.00px;top:132.50px;font-size:6.8px;line-height:10px;color:#686868;letter-spacing:-0.3467px;">145</div>
<div class="m" style="left:326.75px;top:132.50px;font-size:6.8px;line-height:10px;color:#000;letter-spacing:-0.3467px;">        }</div>
<div class="m" style="left:267.00px;top:140.50px;font-size:6.8px;line-height:10px;color:#686868;letter-spacing:-0.3467px;">146</div>
<div class="m" style="left:326.75px;top:140.50px;font-size:6.8px;line-height:10px;color:#000;letter-spacing:-0.3467px;">    }</div>
<div class="m" style="left:267.00px;top:148.50px;font-size:6.8px;line-height:10px;color:#686868;letter-spacing:-0.3467px;">147</div>
<div class="m" style="left:267.00px;top:156.50px;font-size:6.8px;line-height:10px;color:#686868;letter-spacing:-0.3467px;">148</div>
<div class="m" style="left:326.75px;top:156.50px;font-size:6.8px;line-height:10px;color:#000;letter-spacing:-0.3467px;">    <span style="color:#3f5fbf;">/** Only delay if the supplied parameters constitute a delay. */</span></div>
<div class="m" style="left:267.00px;top:164.50px;font-size:6.8px;line-height:10px;color:#686868;letter-spacing:-0.3467px;">149</div>
<div class="m" style="left:281.90px;top:164.50px;font-size:6.8px;line-height:10px;color:#686868;letter-spacing:-0.3467px;">00004436</div>
<div class="m" style="left:326.75px;top:164.50px;font-size:6.8px;line-height:10px;color:#000;letter-spacing:-0.3467px;">    <span style="color:#7f0055;font-weight:bold;">if</span> (loops_required &gt; (uint32_t) 0)</div>
<div class="m" style="left:267.00px;top:172.50px;font-size:6.8px;line-height:10px;color:#686868;letter-spacing:-0.3467px;">150</div>
<div class="m" style="left:326.75px;top:172.50px;font-size:6.8px;line-height:10px;color:#000;letter-spacing:-0.3467px;">    {</div>
<div class="m" style="left:267.00px;top:180.50px;font-size:6.8px;line-height:10px;color:#686868;letter-spacing:-0.3467px;">151</div>
<div class="m" style="left:281.90px;top:180.50px;font-size:6.8px;line-height:10px;color:#686868;letter-spacing:-0.3467px;">00004438</div>
<div class="m" style="left:326.75px;top:180.50px;font-size:6.8px;line-height:10px;color:#000;letter-spacing:-0.3467px;">        bsp_prv_software_delay_loop(loops_required);</div>
<div class="m" style="left:267.00px;top:188.50px;font-size:6.8px;line-height:10px;color:#686868;letter-spacing:-0.3467px;">152</div>
<div class="m" style="left:326.75px;top:188.50px;font-size:6.8px;line-height:10px;color:#000;letter-spacing:-0.3467px;">    }</div>
<div class="m" style="left:267.00px;top:196.50px;font-size:6.8px;line-height:10px;color:#686868;letter-spacing:-0.3467px;">153</div>
<div class="m" style="left:326.75px;top:196.50px;font-size:6.8px;line-height:10px;color:#000;letter-spacing:-0.3467px;">}</div>
<div class="m" style="left:267.00px;top:204.50px;font-size:6.8px;line-height:10px;color:#686868;letter-spacing:-0.3467px;">154</div>
<div class="m" style="left:267.00px;top:212.50px;font-size:6.8px;line-height:10px;color:#686868;letter-spacing:-0.3467px;">155</div>
<div class="m" style="left:326.75px;top:212.50px;font-size:6.8px;line-height:10px;color:#000;letter-spacing:-0.3467px;"><span style="color:#3f5fbf;">/** @} (end addtogroup BSP_MCU) */</span></div>
<div class="m" style="left:267.00px;top:220.50px;font-size:6.8px;line-height:10px;color:#686868;letter-spacing:-0.3467px;">156</div>
<div class="m" style="left:267.00px;top:228.50px;font-size:6.8px;line-height:10px;color:#686868;letter-spacing:-0.3467px;">158</div>
<div class="m" style="left:326.75px;top:228.50px;font-size:6.8px;line-height:10px;color:#000;letter-spacing:-0.3467px;"><span style="color:#3f5fbf;"> *        This assembly language routine takes roughly 4 cycles per loop. 2 additional cycles</span></div>
<div class="m" style="left:267.00px;top:236.50px;font-size:6.8px;line-height:10px;color:#686868;letter-spacing:-0.3467px;">163</div>
<div class="m" style="left:326.75px;top:236.50px;font-size:6.8px;line-height:10px;color:#000;letter-spacing:-0.3467px;">BSP_ATTRIBUTE_STACKLESS <span style="color:#7f0055;font-weight:bold;">void</span> <span style="color:#000000;font-weight:bold;">bsp_prv_software_delay_loop</span> (__attribute__((unused)) uint32_t loop_cnt)</div>
<div class="m" style="left:267.00px;top:244.50px;font-size:6.8px;line-height:10px;color:#686868;letter-spacing:-0.3467px;">164</div>
<div class="m" style="left:326.75px;top:244.50px;font-size:6.8px;line-height:10px;color:#000;letter-spacing:-0.3467px;">{</div>
<div class="m" style="left:267.00px;top:252.50px;font-size:6.8px;line-height:10px;color:#686868;letter-spacing:-0.3467px;">165</div>
<div class="m" style="left:281.90px;top:252.50px;font-size:6.8px;line-height:10px;color:#686868;letter-spacing:-0.3467px;">000043fc</div>
<div class="m" style="left:326.75px;top:252.50px;font-size:6.8px;line-height:10px;color:#000;letter-spacing:-0.3467px;">    <span style="color:#7f0055;font-weight:bold;">__asm</span> <span style="color:#7f0055;font-weight:bold;">volatile</span> (<span style="color:#2a00ff;">"sw_delay_loop:         \n"</span></div>
<div class="m" style="left:267.00px;top:260.50px;font-size:6.8px;line-height:10px;color:#686868;letter-spacing:-0.3467px;">166</div>
<div class="m" style="left:267.00px;top:268.50px;font-size:6.8px;line-height:10px;color:#686868;letter-spacing:-0.3467px;">167</div>
<div class="m" style="left:326.75px;top:268.50px;font-size:6.8px;line-height:10px;color:#000;letter-spacing:-0.3467px;"><span style="color:#7f0055;font-weight:bold;">#if</span> defined(__ICCARM__) || defined(__ARMCC_VERSION)</div>
<div class="m" style="left:267.00px;top:276.50px;font-size:6.8px;line-height:10px;color:#686868;letter-spacing:-0.3467px;">168</div>
<div class="m" style="left:326.75px;top:276.50px;font-size:6.8px;line-height:10px;color:#000;letter-spacing:-0.3467px;">                    <span style="color:#2a00ff;">"   subs r0, #1         \n"</span>   <span style="color:#3f5fbf;">///&lt; 1 cycle</span></div>
<div class="m" style="left:267.00px;top:284.50px;font-size:6.8px;line-height:10px;color:#686868;letter-spacing:-0.3467px;">169</div>
<div class="m" style="left:326.75px;top:284.50px;font-size:6.8px;line-height:10px;color:#000;letter-spacing:-0.3467px;"><span style="color:#7f0055;font-weight:bold;">#elif</span> defined(__GNUC__)</div>
<div class="m" style="left:267.00px;top:292.50px;font-size:6.8px;line-height:10px;color:#686868;letter-spacing:-0.3467px;">170</div>
<div class="m" style="left:326.75px;top:292.50px;font-size:6.8px;line-height:10px;color:#000;letter-spacing:-0.3467px;">                    <span style="color:#2a00ff;">"   sub r0, r0, #1      \n"</span>   <span style="color:#3f5fbf;">///&lt; 1 cycle</span></div>
<div class="m" style="left:267.00px;top:300.50px;font-size:6.8px;line-height:10px;color:#686868;letter-spacing:-0.3467px;">171</div>
<div class="m" style="left:326.75px;top:300.50px;font-size:6.8px;line-height:10px;color:#000;letter-spacing:-0.3467px;"><span style="color:#7f0055;font-weight:bold;">#endif</span></div>
<div class="m" style="left:267.00px;top:308.50px;font-size:6.8px;line-height:10px;color:#686868;letter-spacing:-0.3467px;">172</div>
<div class="m" style="left:267.00px;top:316.50px;font-size:6.8px;line-height:10px;color:#686868;letter-spacing:-0.3467px;">173</div>
<div class="m" style="left:326.75px;top:316.50px;font-size:6.8px;line-height:10px;color:#000;letter-spacing:-0.3467px;">                    <span style="color:#2a00ff;">"   <span class="q">cmp</span> r0, #0          \n"</span>   <span style="color:#3f5fbf;">///&lt; 1 cycle</span></div>
<div class="m" style="left:267.00px;top:324.50px;font-size:6.8px;line-height:10px;color:#686868;letter-spacing:-0.3467px;">174</div>
<div class="m" style="left:267.00px;top:332.50px;font-size:6.8px;line-height:10px;color:#686868;letter-spacing:-0.3467px;">175</div>
<div class="m" style="left:326.75px;top:332.50px;font-size:6.8px;line-height:10px;color:#000;letter-spacing:-0.3467px;"><span style="color:#3f7f5f;">/* CM0 and CM23 have a different instruction set */</span></div>
<div class="m" style="left:267.00px;top:340.50px;font-size:6.8px;line-height:10px;color:#686868;letter-spacing:-0.3467px;">176</div>
<div class="m" style="left:326.75px;top:340.50px;font-size:6.8px;line-height:10px;color:#000;letter-spacing:-0.3467px;"><span style="color:#7f0055;font-weight:bold;">#if</span> defined(__CORE_CM0PLUS_H_GENERIC) || defined(__CORE_CM23_H_GENERIC)</div>
<div class="m" style="left:267.00px;top:348.50px;font-size:6.8px;line-height:10px;color:#686868;letter-spacing:-0.3467px;">177</div>
<div class="m" style="left:326.75px;top:348.50px;font-size:6.8px;line-height:10px;color:#000;letter-spacing:-0.3467px;">                    <span style="color:#2a00ff;">"   <span class="q">bne</span> sw_delay_loop   \n"</span>   <span style="color:#3f5fbf;">///&lt; 2 cycles</span></div>
<div class="m" style="left:267.00px;top:356.50px;font-size:6.8px;line-height:10px;color:#686868;letter-spacing:-0.3467px;">178</div>
<div class="m" style="left:326.75px;top:356.50px;font-size:6.8px;line-height:10px;color:#000;letter-spacing:-0.3467px;"><span style="color:#7f0055;font-weight:bold;">#else</span></div>
<div class="m" style="left:267.00px;top:364.50px;font-size:6.8px;line-height:10px;color:#686868;letter-spacing:-0.3467px;">179</div>
<div class="m" style="left:326.75px;top:364.50px;font-size:6.8px;line-height:10px;color:#000;letter-spacing:-0.3467px;">                    <span style="color:#2a00ff;">"   <span class="q">bne.n</span> sw_delay_loop \n"</span>   <span style="color:#3f5fbf;">///&lt; 2 cycles</span></div>
<div class="m" style="left:267.00px;top:372.50px;font-size:6.8px;line-height:10px;color:#686868;letter-spacing:-0.3467px;">180</div>
<div class="m" style="left:326.75px;top:372.50px;font-size:6.8px;line-height:10px;color:#000;letter-spacing:-0.3467px;"><span style="color:#7f0055;font-weight:bold;">#endif</span></div>
<div class="m" style="left:267.00px;top:380.50px;font-size:6.8px;line-height:10px;color:#686868;letter-spacing:-0.3467px;">181</div>
<div class="m" style="left:326.75px;top:380.50px;font-size:6.8px;line-height:10px;color:#000;letter-spacing:-0.3467px;">                    <span style="color:#2a00ff;">"   <span class="q">bx</span> <span class="q">lr</span>               \n"</span>); <span style="color:#3f5fbf;">///&lt; 2 cycles</span></div>
<div class="m" style="left:267.00px;top:388.50px;font-size:6.8px;line-height:10px;color:#686868;letter-spacing:-0.3467px;">182</div>
<div class="m" style="left:326.75px;top:388.50px;font-size:6.8px;line-height:10px;color:#000;letter-spacing:-0.3467px;">}</div>
<div class="m" style="left:267.00px;top:396.50px;font-size:6.8px;line-height:10px;color:#686868;letter-spacing:-0.3467px;">183</div>
<div style="left:674.35px;top:230.70px;width:2.90px;height:5.60px;border:0.5px solid #555;"></div>
<div style="left:756.20px;top:68.30px;width:268.80px;height:348.00px;background:#f0f0f0;border:0.6px solid #a0a0a0;"></div>
<div class="t" style="left:758.60px;top:57.50px;font-size:5.2px;line-height:10px;color:#1a5fd0;letter-spacing:-0.098px;font-weight:bold;">(x)=</div>
<div class="t" style="left:769.70px;top:57.50px;font-size:6.4px;line-height:10px;color:#111;letter-spacing:-0.213px;">Variable</div>
<svg style="left:796.73px;top:58.23px" width="8.533" height="8.533" viewBox="0 0 16 16"><circle cx="5" cy="5.5" r="3" fill="#3a7fd0" stroke="#1a4f9a" stroke-width="0.8"/><circle cx="11" cy="10.5" r="3" fill="#3a7fd0" stroke="#1a4f9a" stroke-width="0.8"/></svg>
<div class="t" style="left:807.00px;top:57.50px;font-size:6.4px;line-height:10px;color:#111;letter-spacing:-0.163px;">Breakp</div>
<svg style="left:833.73px;top:58.23px" width="8.533" height="8.533" viewBox="0 0 16 16"><path d="M2,2h6l2,2v8h-8z" fill="#fff" stroke="#8a8a7a" stroke-width="1" /><path d="M5,8h4l1,1.5h4.5v5h-9.5z" fill="#f3d36b" stroke="#a87412" stroke-width="0.9" /></svg>
<div class="t" style="left:844.70px;top:57.50px;font-size:6.4px;line-height:10px;color:#111;letter-spacing:-0.046px;">Project</div>
<svg style="left:870.13px;top:58.23px" width="8.533" height="8.533" viewBox="0 0 16 16"><path d="M2,5c1,-3 4,-3 5,0M4,11c1,3 4,3 5,0" fill="none" stroke="#2a6fd0" stroke-width="1.2" /><path d="M9,3l4,4M13,3l-4,4" fill="none" stroke="#2a6fd0" stroke-width="1.2" /><path d="M10,9v6M7.5,12h5" fill="none" stroke="#3a8fd0" stroke-width="1.2" /><circle cx="4" cy="8" r="1.6" fill="#2a6fd0"/></svg>
<div class="t" style="left:881.70px;top:57.50px;font-size:6.4px;line-height:10px;color:#111;letter-spacing:-0.331px;">Express</div>
<svg style="left:908.13px;top:58.23px" width="8.533" height="8.533" viewBox="0 0 16 16"><rect x="2" y="2" width="7" height="4" fill="#fff" stroke="#555" stroke-width="1"/><path d="M5.5,6v5h4" fill="none" stroke="#555" stroke-width="1" /><rect x="9" y="9" width="5.5" height="4" fill="#f3d36b" stroke="#8a6412" stroke-width="0.9"/><path d="M5.5,8.5h-3" fill="none" stroke="#555" stroke-width="1" /></svg>
<div class="t" style="left:919.10px;top:57.50px;font-size:6.4px;line-height:10px;color:#111;letter-spacing:-0.094px;">Periphe</div>
<div style="left:944.00px;top:55.60px;width:46.40px;height:13.30px;background:#f6f6f6;border:0.6px solid #b8b8b8;border-bottom:none;border-top:1.2px solid #1a4fd0;border-radius:1.5px 1.5px 0 0;"></div>
<svg style="left:945.63px;top:58.23px" width="8.533" height="8.533" viewBox="0 0 16 16"><rect x="3" y="2" width="10" height="12" fill="#fff" stroke="#4a4ab0" stroke-width="1.3"/><rect x="3" y="2" width="10" height="3" fill="#6a5ad0"/><path d="M6,5v9" fill="none" stroke="#9a9ad8" stroke-width="0.8" /></svg>
<div class="t" style="left:956.60px;top:57.50px;font-size:6.4px;line-height:10px;color:#111;letter-spacing:-0.185px;">IO Regi</div>
<svg style="left:980.60px;top:59.60px" width="6" height="6" viewBox="0 0 6 6"><path d="M0.6000000000000001,0.6000000000000001L5.4,5.4M5.4,0.6000000000000001L0.6000000000000001,5.4" fill="none" stroke="#6a6a6a" stroke-width="0.55" /></svg>
<div style="left:999.80px;top:58.60px;width:6.20px;height:3.00px;background:#fff;border:0.55px solid #444;border-top:0.9px solid #333;border-radius:0.8px;"></div>
<div style="left:1012.00px;top:58.70px;width:6.00px;height:6.00px;background:#fff;border:0.55px solid #3a3a3a;border-top:1.1px solid #2a2a2a;border-radius:0.6px;"></div>
<div style="left:804.20px;top:68.90px;width:67.20px;height:12.00px;background:#ffffff;border:0.7px solid #9a9a9a;border-top:none;"></div>
<svg style="left:863.80px;top:72.40px" width="6" height="6" viewBox="0 0 6 6"><path d="M0.7,1.8l2.3,2.4l2.3,-2.4" fill="none" stroke="#444" stroke-width="1.15" /></svg>
<svg style="left:873.63px;top:71.13px" width="8.533" height="8.533" viewBox="0 0 16 16"><path d="M8,15l5.5,-6h-3v-8h-5v8h-3z" fill="#fafafa" stroke="#8e8e8e" stroke-width="1.1" /></svg>
<svg style="left:885.43px;top:71.13px" width="8.533" height="8.533" viewBox="0 0 16 16"><path d="M8,1l5.5,6h-3v8h-5v-8h-3z" fill="#fafafa" stroke="#8e8e8e" stroke-width="1.1" /></svg>
<svg style="left:898.23px;top:71.13px" width="8.533" height="8.533" viewBox="0 0 16 16"><rect x="2" y="2" width="12" height="12" fill="#e4eefc" stroke="#5a7ab8" stroke-width="1.2" rx="1.5"/><rect x="4" y="4" width="8" height="8" fill="#fff" stroke="#7a9ad0" stroke-width="0.8"/><path d="M5.2,8h5.6M8,5.2v5.6" fill="none" stroke="#1a3f98" stroke-width="1.6" /></svg>
<svg style="left:911.13px;top:71.13px" width="8.533" height="8.533" viewBox="0 0 16 16"><rect x="2" y="2" width="12" height="12" fill="#e4eefc" stroke="#5a7ab8" stroke-width="1.2" rx="1.5"/><rect x="4" y="4" width="8" height="8" fill="#fff" stroke="#7a9ad0" stroke-width="0.8"/><path d="M5.2,8h5.6" fill="none" stroke="#1a3f98" stroke-width="1.6" /></svg>
<svg style="left:922.33px;top:71.13px" width="8.533" height="8.533" viewBox="0 0 16 16"><path d="M1.5,4h8v-2.8l5.5,4.3l-5.5,4.3v-2.8h-8zM14.5,9.5v3h-8v2.8l-5.5,-4.3l5.5,-4.3v2.8z" fill="#1a4fb0" stroke="#0a2f80" stroke-width="0.5" /></svg>
<svg style="left:935.23px;top:71.13px" width="8.533" height="8.533" viewBox="0 0 16 16"><circle cx="8" cy="9" r="4.5" fill="#e8312a" stroke="#8a1010" stroke-width="1"/><path d="M3,3l10,11" fill="none" stroke="#2a3f9a" stroke-width="1.5" /><path d="M8,1v3M2,9h3M11,9h3" fill="none" stroke="#8a1010" stroke-width="1.2" /></svg>
<svg style="left:946.93px;top:71.13px" width="8.533" height="8.533" viewBox="0 0 16 16"><path d="M8,1l2,5h5l-4,3l1.5,5l-4.5,-3l-4.5,3l1.5,-5l-4,-3h5z" fill="#f5c518" stroke="#b8860b" stroke-width="0.8" /><circle cx="11.5" cy="11.5" r="2.8" fill="#2a6fb8"/></svg>
<svg style="left:959.23px;top:71.13px" width="8.533" height="8.533" viewBox="0 0 16 16"><circle cx="7" cy="7" r="4.5" fill="#dbeeff" stroke="#6a8ab0" stroke-width="1.3"/><path d="M10.5,10.5l4,4" fill="none" stroke="#b8860b" stroke-width="2.2" /></svg>
<svg style="left:971.83px;top:71.13px" width="8.533" height="8.533" viewBox="0 0 16 16"><rect x="2" y="6" width="12" height="6" fill="#4a4a4a" stroke="#222" stroke-width="0.8"/><rect x="4" y="2.5" width="8" height="4" fill="#fff" stroke="#555" stroke-width="0.8"/><rect x="4" y="10" width="8" height="4" fill="#fff" stroke="#555" stroke-width="0.8"/><circle cx="12" cy="8" r="0.8" fill="#ffd84a"/></svg>
<svg style="left:983.93px;top:71.13px" width="8.533" height="8.533" viewBox="0 0 16 16"><rect x="2" y="2" width="12" height="12" fill="#3a4fc8" stroke="#1a2f88" stroke-width="1"/><rect x="5" y="2" width="6" height="4.5" fill="#e8ecff"/><rect x="4" y="9" width="8" height="5" fill="#c8d0ff"/></svg>
<div style="left:995.25px;top:70.50px;width:0.70px;height:9.70px;background:#a4a4a4;"></div>
<svg style="left:999.93px;top:71.13px" width="8.533" height="8.533" viewBox="0 0 16 16"><rect x="2" y="5" width="9" height="9" fill="#eaf2ff" stroke="#2a5fa8" stroke-width="1.2"/><path d="M8,8l5,-5M13,3h-3.5M13,3v3.5" fill="none" stroke="#2a5fa8" stroke-width="1.5" /></svg>
<svg style="left:1015.00px;top:71.00px" width="4" height="9" viewBox="0 0 4 9"><circle cx="2" cy="1.3" r="0.9" fill="#fff" stroke="#222" stroke-width="0.6"/><circle cx="2" cy="4.1" r="0.9" fill="#fff" stroke="#222" stroke-width="0.6"/><circle cx="2" cy="6.9" r="0.9" fill="#fff" stroke="#222" stroke-width="0.6"/></svg>
<div style="left:756.80px;top:80.80px;width:255.40px;height:313.20px;background:#ffffff;"></div>
<div class="t" style="left:762.20px;top:84.80px;font-size:6.4px;line-height:10px;color:#111;letter-spacing:-0.068px;">Name</div>
<div class="t" style="left:859.20px;top:84.80px;font-size:6.4px;line-height:10px;color:#111;letter-spacing:-0.138px;">Value (Hex)</div>
<div class="t" style="left:920.70px;top:84.80px;font-size:6.4px;line-height:10px;color:#111;letter-spacing:-0.062px;">Value (Bin)</div>
<div class="t" style="left:972.00px;top:84.80px;font-size:6.4px;line-height:10px;color:#111;">..</div>
<div class="t" style="left:983.30px;top:84.80px;font-size:6.4px;line-height:10px;color:#111;letter-spacing:-0.254px;">Address</div>
<svg style="left:761.40px;top:98.20px" width="6" height="6" viewBox="0 0 6 6"><path d="M1.6,0.9l2.7,2.1l-2.7,2.1" fill="none" stroke="#555" stroke-width="0.7" /></svg>
<div class="t" style="left:780.60px;top:95.90px;font-size:6.4px;line-height:10px;color:#111;letter-spacing:-0.199px;">ACMPHS0</div>
<div style="left:759.00px;top:104.40px;width:253.20px;height:0.60px;background:#e4e4e4;"></div>
<svg style="left:761.40px;top:107.80px" width="6" height="6" viewBox="0 0 6 6"><path d="M1.6,0.9l2.7,2.1l-2.7,2.1" fill="none" stroke="#555" stroke-width="0.7" /></svg>
<div class="t" style="left:780.60px;top:105.50px;font-size:6.4px;line-height:10px;color:#111;letter-spacing:-0.197px;">ACMPLP</div>
<div style="left:759.00px;top:114.00px;width:253.20px;height:0.60px;background:#e4e4e4;"></div>
<svg style="left:761.40px;top:117.40px" width="6" height="6" viewBox="0 0 6 6"><path d="M1.6,0.9l2.7,2.1l-2.7,2.1" fill="none" stroke="#555" stroke-width="0.7" /></svg>
<div class="t" style="left:780.60px;top:115.10px;font-size:6.4px;line-height:10px;color:#111;letter-spacing:-0.181px;">ADC160</div>
<div style="left:759.00px;top:123.60px;width:253.20px;height:0.60px;background:#e4e4e4;"></div>
<svg style="left:761.40px;top:127.00px" width="6" height="6" viewBox="0 0 6 6"><path d="M1.6,0.9l2.7,2.1l-2.7,2.1" fill="none" stroke="#555" stroke-width="0.7" /></svg>
<div class="t" style="left:780.60px;top:124.70px;font-size:6.4px;line-height:10px;color:#111;letter-spacing:-0.188px;">AGT0</div>
<div style="left:759.00px;top:133.20px;width:253.20px;height:0.60px;background:#e4e4e4;"></div>
<svg style="left:761.40px;top:136.60px" width="6" height="6" viewBox="0 0 6 6"><path d="M1.6,0.9l2.7,2.1l-2.7,2.1" fill="none" stroke="#555" stroke-width="0.7" /></svg>
<div class="t" style="left:780.60px;top:134.30px;font-size:6.4px;line-height:10px;color:#111;letter-spacing:-0.188px;">AGT1</div>
<div style="left:759.00px;top:142.80px;width:253.20px;height:0.60px;background:#e4e4e4;"></div>
<svg style="left:761.40px;top:146.20px" width="6" height="6" viewBox="0 0 6 6"><path d="M1.6,0.9l2.7,2.1l-2.7,2.1" fill="none" stroke="#555" stroke-width="0.7" /></svg>
<div class="t" style="left:780.60px;top:143.90px;font-size:6.4px;line-height:10px;color:#111;letter-spacing:-0.197px;">BUS</div>
<div style="left:759.00px;top:152.40px;width:253.20px;height:0.60px;background:#e4e4e4;"></div>
<svg style="left:761.40px;top:155.80px" width="6" height="6" viewBox="0 0 6 6"><path d="M1.6,0.9l2.7,2.1l-2.7,2.1" fill="none" stroke="#555" stroke-width="0.7" /></svg>
<div class="t" style="left:780.60px;top:153.50px;font-size:6.4px;line-height:10px;color:#111;letter-spacing:-0.203px;">CAC</div>
<div style="left:759.00px;top:162.00px;width:253.20px;height:0.60px;background:#e4e4e4;"></div>
<svg style="left:761.40px;top:165.40px" width="6" height="6" viewBox="0 0 6 6"><path d="M1.6,0.9l2.7,2.1l-2.7,2.1" fill="none" stroke="#555" stroke-width="0.7" /></svg>
<div class="t" style="left:780.60px;top:163.10px;font-size:6.4px;line-height:10px;color:#111;letter-spacing:-0.192px;">CAN0</div>
<div style="left:759.00px;top:171.60px;width:253.20px;height:0.60px;background:#e4e4e4;"></div>
<svg style="left:761.40px;top:175.00px" width="6" height="6" viewBox="0 0 6 6"><path d="M1.6,0.9l2.7,2.1l-2.7,2.1" fill="none" stroke="#555" stroke-width="0.7" /></svg>
<div class="t" style="left:780.60px;top:172.70px;font-size:6.4px;line-height:10px;color:#111;letter-spacing:-0.208px;">CRC</div>
<div style="left:759.00px;top:181.20px;width:253.20px;height:0.60px;background:#e4e4e4;"></div>
<svg style="left:761.40px;top:184.60px" width="6" height="6" viewBox="0 0 6 6"><path d="M1.6,0.9l2.7,2.1l-2.7,2.1" fill="none" stroke="#555" stroke-width="0.7" /></svg>
<div class="t" style="left:780.60px;top:182.30px;font-size:6.4px;line-height:10px;color:#111;letter-spacing:-0.196px;">CTSU</div>
<div style="left:759.00px;top:190.80px;width:253.20px;height:0.60px;background:#e4e4e4;"></div>
<svg style="left:761.40px;top:194.20px" width="6" height="6" viewBox="0 0 6 6"><path d="M1.6,0.9l2.7,2.1l-2.7,2.1" fill="none" stroke="#555" stroke-width="0.7" /></svg>
<div class="t" style="left:780.60px;top:191.90px;font-size:6.4px;line-height:10px;color:#111;letter-spacing:-0.186px;">DAC12</div>
<div style="left:759.00px;top:200.40px;width:253.20px;height:0.60px;background:#e4e4e4;"></div>
<svg style="left:761.40px;top:203.80px" width="6" height="6" viewBox="0 0 6 6"><path d="M1.6,0.9l2.7,2.1l-2.7,2.1" fill="none" stroke="#555" stroke-width="0.7" /></svg>
<div class="t" style="left:780.60px;top:201.50px;font-size:6.4px;line-height:10px;color:#111;letter-spacing:-0.192px;">DAC8</div>
<div style="left:759.00px;top:210.00px;width:253.20px;height:0.60px;background:#e4e4e4;"></div>
<svg style="left:761.40px;top:213.40px" width="6" height="6" viewBox="0 0 6 6"><path d="M1.6,0.9l2.7,2.1l-2.7,2.1" fill="none" stroke="#555" stroke-width="0.7" /></svg>
<div class="t" style="left:780.60px;top:211.10px;font-size:6.4px;line-height:10px;color:#111;letter-spacing:-0.208px;">DBG</div>
<div style="left:759.00px;top:219.60px;width:253.20px;height:0.60px;background:#e4e4e4;"></div>
<svg style="left:761.40px;top:223.00px" width="6" height="6" viewBox="0 0 6 6"><path d="M1.6,0.9l2.7,2.1l-2.7,2.1" fill="none" stroke="#555" stroke-width="0.7" /></svg>
<div class="t" style="left:780.60px;top:220.70px;font-size:6.4px;line-height:10px;color:#111;letter-spacing:-0.213px;">DOC</div>
<div style="left:759.00px;top:229.20px;width:253.20px;height:0.60px;background:#e4e4e4;"></div>
<svg style="left:761.40px;top:232.60px" width="6" height="6" viewBox="0 0 6 6"><path d="M1.6,0.9l2.7,2.1l-2.7,2.1" fill="none" stroke="#555" stroke-width="0.7" /></svg>
<div class="t" style="left:780.60px;top:230.30px;font-size:6.4px;line-height:10px;color:#111;letter-spacing:-0.197px;">DTC</div>
<div style="left:759.00px;top:238.80px;width:253.20px;height:0.60px;background:#e4e4e4;"></div>
<svg style="left:761.40px;top:242.20px" width="6" height="6" viewBox="0 0 6 6"><path d="M1.6,0.9l2.7,2.1l-2.7,2.1" fill="none" stroke="#555" stroke-width="0.7" /></svg>
<div class="t" style="left:780.60px;top:239.90px;font-size:6.4px;line-height:10px;color:#111;letter-spacing:-0.187px;">ELC</div>
<div style="left:759.00px;top:248.40px;width:253.20px;height:0.60px;background:#e4e4e4;"></div>
<svg style="left:761.40px;top:251.80px" width="6" height="6" viewBox="0 0 6 6"><path d="M1.6,0.9l2.7,2.1l-2.7,2.1" fill="none" stroke="#555" stroke-width="0.7" /></svg>
<div class="t" style="left:780.60px;top:249.50px;font-size:6.4px;line-height:10px;color:#111;letter-spacing:-0.197px;">FCACHE</div>
<div style="left:759.00px;top:258.00px;width:253.20px;height:0.60px;background:#e4e4e4;"></div>
<svg style="left:761.40px;top:261.40px" width="6" height="6" viewBox="0 0 6 6"><path d="M1.6,0.9l2.7,2.1l-2.7,2.1" fill="none" stroke="#555" stroke-width="0.7" /></svg>
<div class="t" style="left:780.60px;top:259.10px;font-size:6.4px;line-height:10px;color:#111;letter-spacing:-0.194px;">GPT_OPS</div>
<div style="left:759.00px;top:267.60px;width:253.20px;height:0.60px;background:#e4e4e4;"></div>
<svg style="left:761.40px;top:271.00px" width="6" height="6" viewBox="0 0 6 6"><path d="M1.6,0.9l2.7,2.1l-2.7,2.1" fill="none" stroke="#555" stroke-width="0.7" /></svg>
<div class="t" style="left:780.60px;top:268.70px;font-size:6.4px;line-height:10px;color:#111;letter-spacing:-0.179px;">GPT161</div>
<div style="left:759.00px;top:277.20px;width:253.20px;height:0.60px;background:#e4e4e4;"></div>
<svg style="left:761.40px;top:280.60px" width="6" height="6" viewBox="0 0 6 6"><path d="M1.6,0.9l2.7,2.1l-2.7,2.1" fill="none" stroke="#555" stroke-width="0.7" /></svg>
<div class="t" style="left:780.60px;top:278.30px;font-size:6.4px;line-height:10px;color:#111;letter-spacing:-0.179px;">GPT162</div>
<div style="left:759.00px;top:286.80px;width:253.20px;height:0.60px;background:#e4e4e4;"></div>
<svg style="left:761.40px;top:290.20px" width="6" height="6" viewBox="0 0 6 6"><path d="M1.6,0.9l2.7,2.1l-2.7,2.1" fill="none" stroke="#555" stroke-width="0.7" /></svg>
<div class="t" style="left:780.60px;top:287.90px;font-size:6.4px;line-height:10px;color:#111;letter-spacing:-0.179px;">GPT163</div>
<div style="left:759.00px;top:296.40px;width:253.20px;height:0.60px;background:#e4e4e4;"></div>
<svg style="left:761.40px;top:299.80px" width="6" height="6" viewBox="0 0 6 6"><path d="M1.6,0.9l2.7,2.1l-2.7,2.1" fill="none" stroke="#555" stroke-width="0.7" /></svg>
<div class="t" style="left:780.60px;top:297.50px;font-size:6.4px;line-height:10px;color:#111;letter-spacing:-0.179px;">GPT164</div>
<div style="left:759.00px;top:306.00px;width:253.20px;height:0.60px;background:#e4e4e4;"></div>
<svg style="left:761.40px;top:309.40px" width="6" height="6" viewBox="0 0 6 6"><path d="M1.6,0.9l2.7,2.1l-2.7,2.1" fill="none" stroke="#555" stroke-width="0.7" /></svg>
<div class="t" style="left:780.60px;top:307.10px;font-size:6.4px;line-height:10px;color:#111;letter-spacing:-0.179px;">GPT165</div>
<div style="left:759.00px;top:315.60px;width:253.20px;height:0.60px;background:#e4e4e4;"></div>
<svg style="left:761.40px;top:319.00px" width="6" height="6" viewBox="0 0 6 6"><path d="M1.6,0.9l2.7,2.1l-2.7,2.1" fill="none" stroke="#555" stroke-width="0.7" /></svg>
<div class="t" style="left:780.60px;top:316.70px;font-size:6.4px;line-height:10px;color:#111;letter-spacing:-0.179px;">GPT166</div>
<div style="left:759.00px;top:325.20px;width:253.20px;height:0.60px;background:#e4e4e4;"></div>
<svg style="left:761.40px;top:328.60px" width="6" height="6" viewBox="0 0 6 6"><path d="M1.6,0.9l2.7,2.1l-2.7,2.1" fill="none" stroke="#555" stroke-width="0.7" /></svg>
<div class="t" style="left:780.60px;top:326.30px;font-size:6.4px;line-height:10px;color:#111;letter-spacing:-0.179px;">GPT320</div>
<div style="left:759.00px;top:334.80px;width:253.20px;height:0.60px;background:#e4e4e4;"></div>
<svg style="left:761.40px;top:338.20px" width="6" height="6" viewBox="0 0 6 6"><path d="M1.6,0.9l2.7,2.1l-2.7,2.1" fill="none" stroke="#555" stroke-width="0.7" /></svg>
<div class="t" style="left:780.60px;top:335.90px;font-size:6.4px;line-height:10px;color:#111;letter-spacing:-0.165px;">ICU</div>
<div style="left:759.00px;top:344.40px;width:253.20px;height:0.60px;background:#e4e4e4;"></div>
<svg style="left:761.40px;top:347.80px" width="6" height="6" viewBox="0 0 6 6"><path d="M1.6,0.9l2.7,2.1l-2.7,2.1" fill="none" stroke="#555" stroke-width="0.7" /></svg>
<div class="t" style="left:780.60px;top:345.50px;font-size:6.4px;line-height:10px;color:#111;letter-spacing:-0.132px;">IIC0</div>
<div style="left:759.00px;top:354.00px;width:253.20px;height:0.60px;background:#e4e4e4;"></div>
<svg style="left:761.40px;top:357.40px" width="6" height="6" viewBox="0 0 6 6"><path d="M1.6,0.9l2.7,2.1l-2.7,2.1" fill="none" stroke="#555" stroke-width="0.7" /></svg>
<div class="t" style="left:780.60px;top:355.10px;font-size:6.4px;line-height:10px;color:#111;letter-spacing:-0.132px;">IIC1</div>
<div style="left:759.00px;top:363.60px;width:253.20px;height:0.60px;background:#e4e4e4;"></div>
<svg style="left:761.40px;top:367.00px" width="6" height="6" viewBox="0 0 6 6"><path d="M1.6,0.9l2.7,2.1l-2.7,2.1" fill="none" stroke="#555" stroke-width="0.7" /></svg>
<div class="t" style="left:780.60px;top:364.70px;font-size:6.4px;line-height:10px;color:#111;letter-spacing:-0.184px;">IWDT</div>
<div style="left:759.00px;top:373.20px;width:253.20px;height:0.60px;background:#e4e4e4;"></div>
<svg style="left:761.40px;top:376.60px" width="6" height="6" viewBox="0 0 6 6"><path d="M1.6,0.9l2.7,2.1l-2.7,2.1" fill="none" stroke="#555" stroke-width="0.7" /></svg>
<div class="t" style="left:780.60px;top:374.30px;font-size:6.4px;line-height:10px;color:#111;letter-spacing:-0.164px;">KINT</div>
<div style="left:759.00px;top:382.80px;width:253.20px;height:0.60px;background:#e4e4e4;"></div>
<svg style="left:761.40px;top:386.20px" width="6" height="6" viewBox="0 0 6 6"><path d="M1.6,0.9l2.7,2.1l-2.7,2.1" fill="none" stroke="#555" stroke-width="0.7" /></svg>
<div class="t" style="left:780.60px;top:383.90px;font-size:6.4px;line-height:10px;color:#111;letter-spacing:-0.219px;">MMF</div>
<div style="left:855.40px;top:81.50px;width:0.60px;height:312.50px;background:#e9e9e9;"></div>
<div style="left:916.10px;top:81.50px;width:0.60px;height:312.50px;background:#e9e9e9;"></div>
<div style="left:979.00px;top:81.50px;width:0.60px;height:312.50px;background:#e9e9e9;"></div>
<div style="left:1012.20px;top:80.80px;width:8.80px;height:313.20px;background:#f0f0f0;"></div>
<div style="left:1013.60px;top:91.50px;width:7.00px;height:155.50px;background:#c8c8c8;"></div>
<svg style="left:1013.40px;top:84.80px" width="6" height="6" viewBox="0 0 6 6"><path d="M1.2,3.9l1.8,-1.8l1.8,1.8" fill="none" stroke="#262626" stroke-width="1.1" /></svg>
<svg style="left:1013.40px;top:386.20px" width="6" height="6" viewBox="0 0 6 6"><path d="M1.2,2.1l1.8,1.8l1.8,-1.8" fill="none" stroke="#262626" stroke-width="1.1" /></svg>
<div style="left:756.80px;top:394.00px;width:264.20px;height:8.60px;background:#f0f0f0;"></div>
<div style="left:767.60px;top:394.60px;width:176.80px;height:7.20px;background:#c8c8c8;"></div>
<svg style="left:759.20px;top:395.20px" width="6" height="6" viewBox="0 0 6 6"><path d="M3.9,1.2l-1.8,1.8l1.8,1.8" fill="none" stroke="#262626" stroke-width="1.1" /></svg>
<svg style="left:1004.80px;top:395.20px" width="6" height="6" viewBox="0 0 6 6"><path d="M2.1,1.2l1.8,1.8l-1.8,1.8" fill="none" stroke="#262626" stroke-width="1.1" /></svg>
<div style="left:756.80px;top:402.90px;width:267.80px;height:0.50px;background:#c8c8c8;"></div>
<div style="left:757.60px;top:403.20px;width:41.70px;height:11.80px;background:#ffffff;border-right:0.5px solid #b8b8b8;"></div>
<div style="left:799.30px;top:403.20px;width:53.60px;height:11.80px;background:#f7f7f7;border-right:0.5px solid #b8b8b8;border-bottom:0.5px solid #b8b8b8;"></div>
<div class="t" style="left:760.80px;top:405.20px;font-size:6.4px;line-height:10px;color:#111;letter-spacing:-0.117px;">All Registers</div>
<div class="t" style="left:801.50px;top:404.60px;font-size:6.4px;line-height:10px;color:#111;letter-spacing:-0.201px;">Selected Registers</div>
<svg style="left:260.23px;top:421.33px" width="8.533" height="8.533" viewBox="0 0 16 16"><rect x="1.5" y="2" width="13" height="11" fill="#2a4fc0" stroke="#1a2f90" stroke-width="1" rx="2"/><rect x="3.6" y="4" width="8.8" height="6.6" fill="#f6f9ff"/><path d="M5.5,7.3h5" fill="none" stroke="#223" stroke-width="1.2" /><rect x="4.5" y="13.2" width="7" height="1.6" fill="#1a2f80"/></svg>
<div class="t" style="left:270.90px;top:420.60px;font-size:6.4px;line-height:10px;color:#111;letter-spacing:-0.112px;">Console</div>
<svg style="left:299.43px;top:421.33px" width="8.533" height="8.533" viewBox="0 0 16 16"><path d="M3,2v4M6.5,2v4M10,2v4M13.5,2v4M3,9v5M6.5,9v5M10,9v5M13.5,9v5" fill="none" stroke="#2a6fd0" stroke-width="1.6" stroke-dasharray="1.8 0.9"/></svg>
<div class="t" style="left:309.60px;top:420.60px;font-size:6.4px;line-height:10px;color:#111;letter-spacing:-0.248px;">Registers</div>
<svg style="left:340.33px;top:421.33px" width="8.533" height="8.533" viewBox="0 0 16 16"><path d="M3.5,1.5h7l2.5,2.5v10.5h-9.5z" fill="#fff" stroke="#6a6a5a" stroke-width="1" /><path d="M7,6h2.5v5c0,1.5 -2,1.5 -2.5,0.5" fill="none" stroke="#2a4fb0" stroke-width="1.3" /><path d="M9,13l2,1.5l3,-3.5" fill="none" stroke="#2ea32e" stroke-width="1.2" /></svg>
<div class="t" style="left:350.60px;top:420.60px;font-size:6.4px;line-height:10px;color:#111;letter-spacing:-0.111px;">Debug Shell</div>
<svg style="left:388.73px;top:421.33px" width="8.533" height="8.533" viewBox="0 0 16 16"><rect x="2" y="1.5" width="11" height="9" fill="#fff" stroke="#8a8a7a" stroke-width="1"/><circle cx="5.5" cy="5" r="2" fill="#e81123"/><path d="M9,4h3M9,7h3" fill="none" stroke="#888" stroke-width="1" /><path d="M4,15l2.5,-5l2.5,5z" fill="#f5c518" stroke="#a87412" stroke-width="0.7" /><circle cx="11" cy="12.5" r="1.8" fill="#3a6fd0"/></svg>
<div class="t" style="left:399.50px;top:420.60px;font-size:6.4px;line-height:10px;color:#111;letter-spacing:-0.035px;">Problems</div>
<svg style="left:431.98px;top:421.33px" width="8.533" height="8.533" viewBox="0 0 16 16"><rect x="1.5" y="2" width="11" height="9" fill="#2a4fb5" stroke="#1a2f80" stroke-width="1" rx="1.2"/><rect x="3.3" y="4" width="7.4" height="5" fill="#f0f4ff"/><circle cx="11.5" cy="11" r="3.2" fill="#e8f5e0" stroke="#1a7a1a" stroke-width="1.3"/><path d="M11.5,11l3,3" fill="none" stroke="#1a5a1a" stroke-width="1.5" /></svg>
<div class="t" style="left:442.50px;top:420.60px;font-size:6.4px;line-height:10px;color:#111;letter-spacing:-0.086px;">Debugger Console</div>
<svg style="left:499.48px;top:421.33px" width="8.533" height="8.533" viewBox="0 0 16 16"><circle cx="7.5" cy="8" r="5.5" fill="#5b9fe0" stroke="#2a5fa8" stroke-width="1"/><path d="M3,6c2,-2 4,1 6,-1c1,2 -1,3 1,5c-2,1 -5,0 -7,-4" fill="#4fb84f" /><circle cx="11.5" cy="11.5" r="2.6" fill="#f5c518" stroke="#a87412" stroke-width="0.7"/></svg>
<div class="t" style="left:510.75px;top:420.60px;font-size:6.4px;line-height:10px;color:#111;letter-spacing:-0.198px;">Smart Browser</div>
<div style="left:554.50px;top:419.20px;width:50.50px;height:13.20px;background:#0b6fd6;border-radius:1.2px 1.2px 0 0;"></div>
<svg style="left:556.48px;top:421.33px" width="8.533" height="8.533" viewBox="0 0 16 16"><rect x="5.5" y="2.5" width="5" height="11" fill="#fff" stroke="#d0d8e8" stroke-width="0.8"/><path d="M7,5h2M7,7.5h2M7,10h2" fill="none" stroke="#9ab" stroke-width="0.8" /></svg>
<div class="t" style="left:567.50px;top:420.60px;font-size:6.4px;line-height:10px;color:#ffffff;letter-spacing:0.023px;">Memory</div>
<svg style="left:595.25px;top:422.70px" width="6" height="6" viewBox="0 0 6 6"><path d="M1.0,1.0L5.0,5.0M5.0,1.0L1.0,5.0" fill="none" stroke="#ffffff" stroke-width="0.7" /></svg>
<svg style="left:842.93px;top:420.93px" width="8.533" height="8.533" viewBox="0 0 16 16"><path d="M2,9l5,-5v3h5v4h-5v3z" fill="#f0c030" stroke="#a87412" stroke-width="0.8" /><path d="M9,8l5,3l-5,3z" fill="#2ea32e" stroke="#176b17" stroke-width="0.5" /><path d="M9,2l3,3l-3,3" fill="none" stroke="#f0c030" stroke-width="1.2" /></svg>
<svg style="left:854.93px;top:420.93px" width="8.533" height="8.533" viewBox="0 0 16 16"><path d="M2,4v4M5,4v4M8,4v4M11,4v4M14,4v4" fill="none" stroke="#2a3fb0" stroke-width="1.4" /><path d="M9,10h5v4z" fill="#2a3fb0" /></svg>
<svg style="left:867.23px;top:420.93px" width="8.533" height="8.533" viewBox="0 0 16 16"><path d="M2,4v4M5,4v4M8,4v4M11,4v4M14,4v4" fill="none" stroke="#2a3fb0" stroke-width="1.4" /><path d="M2,10h5l-5,4z" fill="#2a3fb0" /></svg>
<svg style="left:879.93px;top:420.93px" width="8.533" height="8.533" viewBox="0 0 16 16"><path d="M2,10l4,-4l2,2l4,-5l2,4l-4,4l-2,-2l-3,4z" fill="#f0c030" stroke="#a87412" stroke-width="0.8" /></svg>
<svg style="left:892.53px;top:420.93px" width="8.533" height="8.533" viewBox="0 0 16 16"><path d="M3.5,1.5h7l2.5,2.5v10.5h-9.5z" fill="#fff" stroke="#9a9a7a" stroke-width="1" /><path d="M10.5,1.5v2.5h2.5" fill="#f5e6a0" stroke="#9a9a7a" stroke-width="0.7" /></svg>
<svg style="left:904.63px;top:420.93px" width="8.533" height="8.533" viewBox="0 0 16 16"><rect x="2" y="5" width="10" height="9" fill="#eaf2ff" stroke="#2a5fa8" stroke-width="1.2"/><rect x="2" y="5" width="10" height="2.5" fill="#2a5fa8"/><path d="M8,5l5,-4v2h2v3h-2v2z" fill="#2ea32e" stroke="#176b17" stroke-width="0.5" /></svg>
<div style="left:916.45px;top:420.30px;width:0.70px;height:10.00px;background:#a4a4a4;"></div>
<div style="left:919.70px;top:419.60px;width:11.20px;height:11.20px;background:#cce4f7;"></div>
<svg style="left:921.03px;top:420.93px" width="8.533" height="8.533" viewBox="0 0 16 16"><path d="M2,7h7v-2.5l4,3.5l-4,3.5v-2.5h-7z" fill="#f5d04a" stroke="#a87412" stroke-width="0.7" /><path d="M11,3v10" fill="none" stroke="#e05a7a" stroke-width="1.4" /><path d="M13.5,4v9" fill="none" stroke="#5a8fd8" stroke-width="1.2" /></svg>
<div style="left:933.15px;top:420.30px;width:0.70px;height:10.00px;background:#a4a4a4;"></div>
<svg style="left:937.83px;top:420.93px" width="8.533" height="8.533" viewBox="0 0 16 16"><rect x="2.5" y="2" width="11" height="8.5" fill="#f4f8ff" stroke="#3a5f9a" stroke-width="1.2" rx="1"/><path d="M4,13c2,2 6,2 8,0" fill="none" stroke="#2a5fb8" stroke-width="1.6" /><path d="M8,11v2" fill="none" stroke="#3a5f9a" stroke-width="1.2" /></svg>
<div style="left:949.00px;top:419.60px;width:11.40px;height:11.20px;background:#cce4f7;"></div>
<svg style="left:950.43px;top:420.93px" width="8.533" height="8.533" viewBox="0 0 16 16"><path d="M2,5l4,-3.5v2h4v3h-4v2z" fill="#f5c830" stroke="#a87412" stroke-width="0.8" /><path d="M14,11l-4,3.5v-2h-4v-3h4v-2z" fill="#f5c830" stroke="#a87412" stroke-width="0.8" /></svg>
<div style="left:961.65px;top:420.30px;width:0.70px;height:10.00px;background:#a4a4a4;"></div>
<svg style="left:966.33px;top:420.93px" width="8.533" height="8.533" viewBox="0 0 16 16"><rect x="3" y="2" width="5" height="4" fill="#f5c830" stroke="#a87412" stroke-width="0.8"/><rect x="3" y="8" width="5" height="6" fill="#5b8fd8" stroke="#2a4f98" stroke-width="0.8"/><rect x="9.5" y="5" width="4" height="8" fill="#dfe8f8" stroke="#6a7a9a" stroke-width="0.8"/></svg>
<svg style="left:976.73px;top:420.93px" width="8.533" height="8.533" viewBox="0 0 16 16"><path d="M4.4,6h7.2l-3.6,4z" fill="#111" /></svg>
<svg style="left:989.10px;top:420.80px" width="4" height="9" viewBox="0 0 4 9"><circle cx="2" cy="1.3" r="0.9" fill="#fff" stroke="#222" stroke-width="0.6"/><circle cx="2" cy="4.1" r="0.9" fill="#fff" stroke="#222" stroke-width="0.6"/><circle cx="2" cy="6.9" r="0.9" fill="#fff" stroke="#222" stroke-width="0.6"/></svg>
<div style="left:1000.10px;top:421.80px;width:6.20px;height:3.00px;background:#fff;border:0.55px solid #444;border-top:0.9px solid #333;border-radius:0.8px;"></div>
<div style="left:1012.20px;top:421.90px;width:6.00px;height:6.00px;background:#fff;border:0.55px solid #3a3a3a;border-top:1.1px solid #2a2a2a;border-radius:0.6px;"></div>
<div style="left:257.60px;top:432.00px;width:765.60px;height:107.80px;background:#ffffff;border:0.8px solid #3a72c8;border-left-color:#8ab0e6;border-top-color:#4a80d0;"></div>
<div style="left:257.60px;top:432.00px;width:210.40px;height:0.80px;background:#a4c6f0;"></div>
<div style="left:257.60px;top:539.00px;width:210.40px;height:0.80px;background:#a4c6f0;"></div>
<div style="left:258.30px;top:432.70px;width:763.60px;height:10.40px;background:#f2f2f2;"></div>
<div style="left:258.30px;top:443.00px;width:208.40px;height:0.70px;background:#9a9a9a;"></div>
<div style="left:468.75px;top:442.90px;width:553.65px;height:0.80px;background:#7a7a7a;"></div>
<div class="t" style="left:258.40px;top:431.80px;font-size:6.4px;line-height:10px;color:#111;letter-spacing:0.120px;">Monitors</div>
<svg style="left:430.23px;top:433.93px" width="8.533" height="8.533" viewBox="0 0 16 16"><path d="M6,2h4v4h4v4h-4v4h-4v-4h-4v-4h4z" fill="#9ad02a" stroke="#5a8a12" stroke-width="1" /></svg>
<svg style="left:443.23px;top:433.93px" width="8.533" height="8.533" viewBox="0 0 16 16"><path d="M3,3l10,10M13,3l-10,10" fill="none" stroke="#4a4a4a" stroke-width="2.6" /></svg>
<svg style="left:455.73px;top:433.93px" width="8.533" height="8.533" viewBox="0 0 16 16"><path d="M2,2l7,7M9,2l-7,7" fill="none" stroke="#5a5a5a" stroke-width="2" /><path d="M7,7l7,7M14,7l-7,7" fill="none" stroke="#7a7a7a" stroke-width="2" /></svg>
<div style="left:466.80px;top:432.70px;width:0.60px;height:105.80px;background:#c0c0c0;"></div>
<div style="left:267.00px;top:455.10px;width:35.00px;height:8.90px;background:#cce4f7;"></div>
<svg style="left:269.20px;top:446.60px" width="7.000" height="7.000" viewBox="0 0 16 16"><path d="M8,2.5l5.5,5.5l-5.5,5.5l-5.5,-5.5z" fill="#2a6fc8" stroke="#1a3f88" stroke-width="0.8" /><path d="M8,4l4,4h-8z" fill="#8ac0f0" /></svg>
<div class="t" style="left:281.00px;top:445.10px;font-size:6.4px;line-height:10px;color:#111;letter-spacing:-0.185px;">0x43C</div>
<svg style="left:269.20px;top:456.10px" width="7.000" height="7.000" viewBox="0 0 16 16"><path d="M8,2.5l5.5,5.5l-5.5,5.5l-5.5,-5.5z" fill="#2a6fc8" stroke="#1a3f88" stroke-width="0.8" /><path d="M8,4l4,4h-8z" fill="#8ac0f0" /></svg>
<div class="t" style="left:281.00px;top:454.60px;font-size:6.4px;line-height:10px;color:#111;letter-spacing:-0.175px;">0x3800</div>
<svg style="left:269.20px;top:465.60px" width="7.000" height="7.000" viewBox="0 0 16 16"><path d="M8,2.5l5.5,5.5l-5.5,5.5l-5.5,-5.5z" fill="#2a6fc8" stroke="#1a3f88" stroke-width="0.8" /><path d="M8,4l4,4h-8z" fill="#8ac0f0" /></svg>
<div class="t" style="left:281.00px;top:464.10px;font-size:6.4px;line-height:10px;color:#111;letter-spacing:-0.181px;">0xE800</div>
<div style="left:468.75px;top:432.50px;width:100.00px;height:10.40px;background:#0c74e2;"></div>
<div class="t" style="left:470.50px;top:433.10px;font-size:6.4px;line-height:10px;color:#0a1a40;letter-spacing:-0.178px;">0x3800 : 0x3800 &lt;Hex Integer&gt;</div>
<svg style="left:559.50px;top:435.20px" width="6" height="6" viewBox="0 0 6 6"><path d="M1.1,1.1L4.9,4.9M4.9,1.1L1.1,4.9" fill="none" stroke="#123" stroke-width="0.6" /></svg>
<div style="left:569.20px;top:433.40px;width:65.00px;height:10.00px;background:#f4f4f4;border:0.5px solid #c8c8c8;border-bottom:none;"></div>
<svg style="left:571.23px;top:433.93px" width="8.533" height="8.533" viewBox="0 0 16 16"><path d="M6,2h4v4h4v4h-4v4h-4v-4h-4v-4h4z" fill="#9ad02a" stroke="#5a8a12" stroke-width="1" /></svg>
<div class="t" style="left:582.50px;top:433.20px;font-size:6.4px;line-height:10px;color:#111;letter-spacing:-0.126px;">New Renderings...</div>
<div style="left:468.35px;top:443.50px;width:0.90px;height:95.30px;background:#1a2a6a;"></div>
<div style="left:529.70px;top:444.00px;width:0.60px;height:94.50px;background:#ebeff5;"></div>
<div style="left:570.45px;top:444.00px;width:0.60px;height:94.50px;background:#ebeff5;"></div>
<div style="left:610.45px;top:444.00px;width:0.60px;height:94.50px;background:#ebeff5;"></div>
<div style="left:649.70px;top:444.00px;width:0.60px;height:94.50px;background:#ebeff5;"></div>
<div style="left:689.70px;top:444.00px;width:0.60px;height:94.50px;background:#ebeff5;"></div>
<div class="t" style="left:473.00px;top:445.50px;font-size:6.4px;line-height:10px;color:#111;letter-spacing:-0.211px;">Address</div>
<div class="t" style="left:533.25px;top:445.50px;font-size:6.4px;line-height:10px;color:#111;letter-spacing:-0.077px;">0 - 3</div>
<div class="t" style="left:574.25px;top:445.50px;font-size:6.4px;line-height:10px;color:#111;letter-spacing:-0.077px;">4 - 7</div>
<div class="t" style="left:613.75px;top:445.50px;font-size:6.4px;line-height:10px;color:#111;letter-spacing:-0.081px;">8 - B</div>
<div class="t" style="left:653.25px;top:445.50px;font-size:6.4px;line-height:10px;color:#111;letter-spacing:-0.085px;">C - F</div>
<div style="left:468.75px;top:467.89px;width:543.75px;height:0.60px;background:#ededed;"></div>
<div class="t" style="left:477.00px;top:457.60px;font-size:6.4px;line-height:10px;color:#111;letter-spacing:-0.372px;">0000000000003800</div>
<div style="left:531.20px;top:458.00px;width:38.80px;height:8.70px;background:#2b6fd6;"></div>
<div class="t" style="left:538.25px;top:457.60px;font-size:6.4px;line-height:10px;color:#ffffff;letter-spacing:-0.048px;font-weight:bold;">96F3883D</div>
<div class="t" style="left:580.00px;top:457.60px;font-size:6.4px;line-height:10px;color:#111;letter-spacing:-0.359px;">00000000</div>
<div class="t" style="left:619.50px;top:457.60px;font-size:6.4px;line-height:10px;color:#111;letter-spacing:-0.359px;">00000100</div>
<div class="t" style="left:659.00px;top:457.60px;font-size:6.4px;line-height:10px;color:#e8202a;letter-spacing:-0.486px;">00000FC4</div>
<div class="t" style="left:650.50px;top:459.00px;font-size:5.4px;line-height:10px;color:#1a3a9a;font-weight:bold;">Δ</div>
<div style="left:468.75px;top:478.07px;width:543.75px;height:0.60px;background:#ededed;"></div>
<div class="t" style="left:477.00px;top:467.78px;font-size:6.4px;line-height:10px;color:#111;letter-spacing:-0.372px;">0000000000003810</div>
<div class="t" style="left:538.25px;top:467.78px;font-size:6.4px;line-height:10px;color:#111;letter-spacing:-0.359px;">00000000</div>
<div class="t" style="left:580.00px;top:467.78px;font-size:6.4px;line-height:10px;color:#111;letter-spacing:-0.359px;">00000001</div>
<div class="t" style="left:619.50px;top:467.78px;font-size:6.4px;line-height:10px;color:#111;letter-spacing:-0.359px;">00000000</div>
<div class="t" style="left:659.00px;top:467.78px;font-size:6.4px;line-height:10px;color:#111;letter-spacing:-0.359px;">00000000</div>
<div style="left:468.75px;top:488.25px;width:543.75px;height:0.60px;background:#ededed;"></div>
<div class="t" style="left:477.00px;top:477.96px;font-size:6.4px;line-height:10px;color:#111;letter-spacing:-0.372px;">0000000000003820</div>
<div class="t" style="left:538.25px;top:477.96px;font-size:6.4px;line-height:10px;color:#111;transform:scaleX(0.8121);transform-origin:0 50%;">FFFFFFFF</div>
<div class="t" style="left:580.00px;top:477.96px;font-size:6.4px;line-height:10px;color:#111;transform:scaleX(0.8121);transform-origin:0 50%;">FFFFFFFF</div>
<div class="t" style="left:619.50px;top:477.96px;font-size:6.4px;line-height:10px;color:#111;transform:scaleX(0.8121);transform-origin:0 50%;">FFFFFFFF</div>
<div class="t" style="left:659.00px;top:477.96px;font-size:6.4px;line-height:10px;color:#111;transform:scaleX(0.8121);transform-origin:0 50%;">FFFFFFFF</div>
<div style="left:468.75px;top:498.43px;width:543.75px;height:0.60px;background:#ededed;"></div>
<div class="t" style="left:477.00px;top:488.14px;font-size:6.4px;line-height:10px;color:#111;letter-spacing:-0.372px;">0000000000003830</div>
<div class="t" style="left:538.25px;top:488.14px;font-size:6.4px;line-height:10px;color:#111;transform:scaleX(0.8121);transform-origin:0 50%;">FFFFFFFF</div>
<div class="t" style="left:580.00px;top:488.14px;font-size:6.4px;line-height:10px;color:#111;transform:scaleX(0.8121);transform-origin:0 50%;">FFFFFFFF</div>
<div class="t" style="left:619.50px;top:488.14px;font-size:6.4px;line-height:10px;color:#111;transform:scaleX(0.8121);transform-origin:0 50%;">FFFFFFFF</div>
<div class="t" style="left:659.00px;top:488.14px;font-size:6.4px;line-height:10px;color:#111;transform:scaleX(0.8121);transform-origin:0 50%;">FFFFFFFF</div>
<div style="left:468.75px;top:508.61px;width:543.75px;height:0.60px;background:#ededed;"></div>
<div class="t" style="left:477.00px;top:498.32px;font-size:6.4px;line-height:10px;color:#111;letter-spacing:-0.372px;">0000000000003840</div>
<div class="t" style="left:538.25px;top:498.32px;font-size:6.4px;line-height:10px;color:#111;transform:scaleX(0.8121);transform-origin:0 50%;">FFFFFFFF</div>
<div class="t" style="left:580.00px;top:498.32px;font-size:6.4px;line-height:10px;color:#111;transform:scaleX(0.8121);transform-origin:0 50%;">FFFFFFFF</div>
<div class="t" style="left:619.50px;top:498.32px;font-size:6.4px;line-height:10px;color:#111;transform:scaleX(0.8121);transform-origin:0 50%;">FFFFFFFF</div>
<div class="t" style="left:659.00px;top:498.32px;font-size:6.4px;line-height:10px;color:#111;transform:scaleX(0.8121);transform-origin:0 50%;">FFFFFFFF</div>
<div style="left:468.75px;top:518.79px;width:543.75px;height:0.60px;background:#ededed;"></div>
<div class="t" style="left:477.00px;top:508.50px;font-size:6.4px;line-height:10px;color:#111;letter-spacing:-0.372px;">0000000000003850</div>
<div class="t" style="left:538.25px;top:508.50px;font-size:6.4px;line-height:10px;color:#111;transform:scaleX(0.8121);transform-origin:0 50%;">FFFFFFFF</div>
<div class="t" style="left:580.00px;top:508.50px;font-size:6.4px;line-height:10px;color:#111;transform:scaleX(0.8121);transform-origin:0 50%;">FFFFFFFF</div>
<div class="t" style="left:619.50px;top:508.50px;font-size:6.4px;line-height:10px;color:#111;transform:scaleX(0.8121);transform-origin:0 50%;">FFFFFFFF</div>
<div class="t" style="left:659.00px;top:508.50px;font-size:6.4px;line-height:10px;color:#111;transform:scaleX(0.8121);transform-origin:0 50%;">FFFFFFFF</div>
<div style="left:468.75px;top:528.97px;width:543.75px;height:0.60px;background:#ededed;"></div>
<div class="t" style="left:477.00px;top:518.68px;font-size:6.4px;line-height:10px;color:#111;letter-spacing:-0.372px;">0000000000003860</div>
<div class="t" style="left:538.25px;top:518.68px;font-size:6.4px;line-height:10px;color:#111;transform:scaleX(0.8121);transform-origin:0 50%;">FFFFFFFF</div>
<div class="t" style="left:580.00px;top:518.68px;font-size:6.4px;line-height:10px;color:#111;transform:scaleX(0.8121);transform-origin:0 50%;">FFFFFFFF</div>
<div class="t" style="left:619.50px;top:518.68px;font-size:6.4px;line-height:10px;color:#111;transform:scaleX(0.8121);transform-origin:0 50%;">FFFFFFFF</div>
<div class="t" style="left:659.00px;top:518.68px;font-size:6.4px;line-height:10px;color:#111;transform:scaleX(0.8121);transform-origin:0 50%;">FFFFFFFF</div>
<div class="t" style="left:477.00px;top:528.86px;font-size:6.4px;line-height:10px;color:#111;letter-spacing:-0.372px;">0000000000003870</div>
<div class="t" style="left:538.25px;top:528.86px;font-size:6.4px;line-height:10px;color:#111;transform:scaleX(0.8121);transform-origin:0 50%;">FFFFFFFF</div>
<div class="t" style="left:580.00px;top:528.86px;font-size:6.4px;line-height:10px;color:#111;transform:scaleX(0.8121);transform-origin:0 50%;">FFFFFFFF</div>
<div class="t" style="left:619.50px;top:528.86px;font-size:6.4px;line-height:10px;color:#111;transform:scaleX(0.8121);transform-origin:0 50%;">FFFFFFFF</div>
<div class="t" style="left:659.00px;top:528.86px;font-size:6.4px;line-height:10px;color:#111;transform:scaleX(0.8121);transform-origin:0 50%;">FFFFFFFF</div>
<div style="left:1013.20px;top:443.80px;width:8.60px;height:94.60px;background:#f0f0f0;"></div>
<div style="left:1014.20px;top:485.30px;width:6.60px;height:10.80px;background:#c8c8c8;"></div>
<svg style="left:1014.40px;top:446.60px" width="6" height="6" viewBox="0 0 6 6"><path d="M1.2,3.9l1.8,-1.8l1.8,1.8" fill="none" stroke="#262626" stroke-width="1.1" /></svg>
<svg style="left:1014.40px;top:531.00px" width="6" height="6" viewBox="0 0 6 6"><path d="M1.2,2.1l1.8,1.8l1.8,-1.8" fill="none" stroke="#262626" stroke-width="1.1" /></svg>
<div style="left:0.00px;top:541.00px;width:150.00px;height:10.20px;background:#bfbfbf;"></div>
<div class="t" style="left:9.50px;top:541.00px;font-size:6.4px;line-height:10px;color:#ffffff;letter-spacing:-0.209px;">Suspended</div>
<svg style="left:152.63px;top:541.73px" width="8.533" height="8.533" viewBox="0 0 16 16"><path d="M1,5.5h7.5v-3l6.5,5.5l-6.5,5.5v-3h-7.5z" fill="#f5b800" stroke="#e0a000" stroke-width="0.5" /></svg>
<div class="t" style="left:166.25px;top:541.00px;font-size:6.4px;line-height:10px;color:#111;letter-spacing:-0.323px;">0x00004400</div>
<svg style="left:251.73px;top:541.33px" width="8.533" height="8.533" viewBox="0 0 16 16"><circle cx="8" cy="8" r="6.3" fill="#fff" stroke="#111" stroke-width="2.0"/><path d="M8,8l3,-3" fill="none" stroke="#c00" stroke-width="1.2" /><path d="M8,8v-3.5" fill="none" stroke="#111" stroke-width="1" /></svg>
<div class="t" style="left:267.50px;top:541.00px;font-size:6.4px;line-height:10px;color:#111;letter-spacing:-0.273px;">415178.0 ms</div>
<svg style="left:332.23px;top:541.33px" width="8.533" height="8.533" viewBox="0 0 16 16"><circle cx="8" cy="8" r="6.5" fill="#3a8fe0" stroke="#1a5fb0" stroke-width="1"/><rect x="7" y="6.5" width="2" height="6" fill="#fff"/><circle cx="8" cy="4.2" r="1.2" fill="#fff"/></svg>
<div class="t" style="left:347.50px;top:541.00px;font-size:6.4px;line-height:10px;color:#111;letter-spacing:-0.180px;">System Time</div>
<div style="left:872.20px;top:543.00px;width:0.60px;height:0.90px;background:#9a9a9a;"></div>
<div style="left:872.20px;top:544.90px;width:0.60px;height:0.90px;background:#9a9a9a;"></div>
<div style="left:872.20px;top:546.80px;width:0.60px;height:0.90px;background:#9a9a9a;"></div>
<div style="left:872.20px;top:548.70px;width:0.60px;height:0.90px;background:#9a9a9a;"></div>
<div style="left:872.20px;top:550.60px;width:0.60px;height:0.90px;background:#9a9a9a;"></div>
</body></html>
